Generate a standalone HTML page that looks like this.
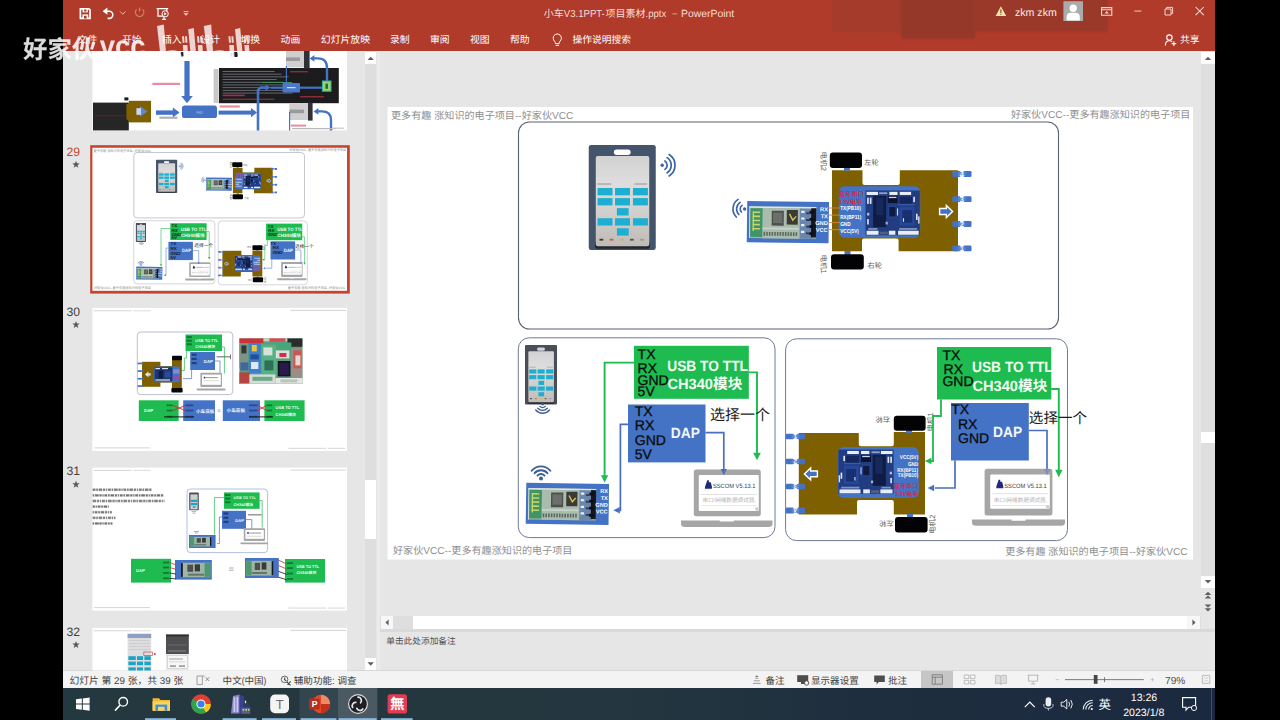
<!DOCTYPE html>
<html lang="zh-CN"><head><meta charset="utf-8"><title>小车V3.1PPT-项目素材.pptx - PowerPoint</title>
<style>
html,body{margin:0;padding:0;background:#000;}
body{width:1280px;height:720px;position:relative;overflow:hidden;font-family:'Liberation Sans','Noto Sans CJK SC',sans-serif;}
.app div{position:absolute;box-sizing:border-box;}
svg{position:absolute;left:0;top:0;overflow:visible;}
svg text{font-family:'Liberation Sans','Noto Sans CJK SC',sans-serif;text-rendering:geometricPrecision;}
</style></head>
<body>
<div class="app">
<div class="window" style="left:63px;top:0px;width:1152px;height:720px;background:#E6E6E6;"></div>
<header><div class="titlebar" style="left:63px;top:0px;width:1152px;height:51px;background:#B03B2B;"></div></header>
<aside><div class="thumb-pane" style="left:63px;top:51px;width:317.4px;height:620px;background:#E6E6E6;"></div>
<div class="thumb-scroll" style="left:365px;top:51px;width:11.4px;height:619.5px;background:#DEDEDE;"></div>
<div class="sb-btn" style="left:365px;top:52.4px;width:11.4px;height:11.6px;background:#fff;"></div>
<div class="sb-btn" style="left:365px;top:657.6px;width:11.4px;height:12.4px;background:#fff;"></div>
<div class="sb-thumb" style="left:365px;top:480px;width:11.4px;height:58.8px;background:#fff;"></div>
<div class="splitter" style="left:376.8px;top:51px;width:4px;height:619.5px;background:#EBEBEB;"></div></aside>
<main><div class="editor" style="left:380.4px;top:51px;width:834.6px;height:578px;background:#E6E6E6;"></div>
<div class="v-scroll" style="left:1201px;top:51px;width:14px;height:565px;background:#DEDEDE;"></div>
<div class="sb-btn" style="left:1201px;top:52.4px;width:14px;height:11.6px;background:#fff;"></div>
<div class="sb-thumb" style="left:1201px;top:431.6px;width:14px;height:11.8px;background:#fff;"></div>
<div class="sb-btn" style="left:1201px;top:575.6px;width:14px;height:12px;background:#fff;"></div>
<div style="left:1201px;top:587.6px;width:14px;height:28.4px;background:#E6E6E6;"></div>
<div class="h-scroll" style="left:380.4px;top:616px;width:820.6px;height:12.8px;background:#DEDEDE;"></div>
<div class="sb-btn" style="left:381px;top:616px;width:12px;height:12.8px;background:#F7F7F7;"></div>
<div class="sb-thumb" style="left:412.6px;top:616px;width:774.8px;height:12.8px;background:#fff;"></div>
<div class="sb-btn" style="left:1187.4px;top:616px;width:13px;height:12.8px;background:#F7F7F7;"></div>
<div class="split" style="left:380.4px;top:628.8px;width:834.6px;height:2.8px;background:#D9D9D9;"></div>
<div class="notes" style="left:380.4px;top:631.6px;width:834.6px;height:39.4px;background:#E6E6E6;"></div></main>
<footer><div class="sb-line" style="left:63px;top:669.6px;width:1152px;height:1.4px;background:#D8D8D8;"></div><div class="statusbar" style="left:63px;top:670.6px;width:1152px;height:17.4px;background:#F3F3F3;"></div>
<div class="view-active" style="left:921px;top:671px;width:32px;height:17px;background:#C6C6C6;"></div>
<div class="taskbar" style="left:63px;top:688px;width:1152px;height:32px;background:linear-gradient(90deg,#24383F 0%,#243740 48%,#1F2F3E 66%,#1B2940 100%);"></div></footer>
</div>
<svg id="ui" width="1280" height="720" viewBox="0 0 1280 720">
<defs><linearGradient id="scr" x1="0" y1="0" x2="0" y2="1"><stop offset="0" stop-color="#d2d2d2"/><stop offset="0.3" stop-color="#dddddd"/><stop offset="0.6" stop-color="#d2d1cf"/><stop offset="1" stop-color="#bfbbb5"/></linearGradient><clipPath id="thumbclip"><rect x="63" y="51" width="317" height="619.5"/></clipPath><filter id="soft" x="-10%" y="-30%" width="120%" height="160%"><feGaussianBlur stdDeviation="3"/></filter><filter id="soft1" x="-5%" y="-20%" width="110%" height="140%"><feGaussianBlur stdDeviation="1.1"/></filter><linearGradient id="tb" x1="0" y1="0" x2="1" y2="0"><stop offset="0" stop-color="#22363F"/><stop offset="0.45" stop-color="#1F303D"/><stop offset="1" stop-color="#1B2941"/></linearGradient><g id="s29"><rect x="387.5" y="107" width="805.5" height="452.5" fill="#fff"/>
<g fill="#8f8f8f"><text x="391" y="119.2" font-size="10.1">更多有趣</text><text x="431.4" y="119.2" font-size="10.1" xml:space="preserve"> </text><text x="434.21" y="119.2" font-size="10.1">涨知识的电子项目</text><text x="515.01" y="119.2" font-size="10.1" xml:space="preserve">--</text><text x="521.73" y="119.2" font-size="10.1">好家伙</text><text x="552.03" y="119.2" font-size="10.1" xml:space="preserve">VCC</text></g>
<g fill="#8f8f8f"><text x="1010.95" y="118.3" font-size="10.1">好家伙</text><text x="1041.25" y="118.3" font-size="10.1" xml:space="preserve">VCC--</text><text x="1069.3" y="118.3" font-size="10.1">更多有趣涨知识的电子项目</text></g>
<g fill="#8f8f8f"><text x="393" y="553.6" font-size="10.1">好家伙</text><text x="423.3" y="553.6" font-size="10.1" xml:space="preserve">VCC--</text><text x="451.35" y="553.6" font-size="10.1">更多有趣涨知识的电子项目</text></g>
<g fill="#8f8f8f"><text x="1005.14" y="555.2" font-size="10.1">更多有趣</text><text x="1045.54" y="555.2" font-size="10.1" xml:space="preserve"> </text><text x="1048.35" y="555.2" font-size="10.1">涨知识的电子项目</text><text x="1129.15" y="555.2" font-size="10.1" xml:space="preserve">--</text><text x="1135.88" y="555.2" font-size="10.1">好家伙</text><text x="1166.18" y="555.2" font-size="10.1" xml:space="preserve">VCC</text></g>
<rect x="518.5" y="122" width="540" height="207" fill="none" rx="11" stroke="#5a6172" stroke-width="1.1"/>
<rect x="588.75" y="145" width="67" height="105" fill="#44546A" rx="2.35"/><rect x="613.88" y="149.51" width="16.75" height="5.46" fill="#fff" rx="2.73"/><rect x="594.98" y="241.18" width="55.07" height="7.56" fill="#23262b" rx="3.35"/><rect x="595.78" y="156.03" width="53.47" height="90.19" fill="url(#scr)" rx="2.01"/><rect x="597.39" y="183.46" width="13.9" height="1.1" fill="#9a9a98"/><rect x="634.28" y="183.46" width="12.83" height="1.1" fill="#9a9a98"/><rect x="597.55" y="188.03" width="14.97" height="7.32" fill="#1DAFD2"/><rect x="615.03" y="188.03" width="14.97" height="7.32" fill="#1DAFD2"/><rect x="632.94" y="188.03" width="14.97" height="7.32" fill="#1DAFD2"/><rect x="597.55" y="198.09" width="14.97" height="7.32" fill="#1DAFD2"/><rect x="615.03" y="198.09" width="14.97" height="7.32" fill="#1DAFD2"/><rect x="632.94" y="198.09" width="14.97" height="7.32" fill="#1DAFD2"/><rect x="616.9" y="208.15" width="11.76" height="7.32" fill="#1DAFD2"/><rect x="597.55" y="218.21" width="14.97" height="7.32" fill="#1DAFD2"/><rect x="615.03" y="218.21" width="14.97" height="7.32" fill="#1DAFD2"/><rect x="632.94" y="218.21" width="14.97" height="7.32" fill="#1DAFD2"/><rect x="616.9" y="228.27" width="11.76" height="7.32" fill="#1DAFD2"/><rect x="599.53" y="238.79" width="3.74" height="1.83" fill="#3b3b3b"/><rect x="609.69" y="238.79" width="3.74" height="1.83" fill="#c45a5a"/><rect x="619.84" y="238.79" width="3.74" height="1.83" fill="#c9b27a"/><rect x="630" y="238.79" width="3.74" height="1.83" fill="#555"/><rect x="640.16" y="238.79" width="3.74" height="1.83" fill="#999"/>
<circle cx="662.2" cy="165.2" r="1.7" fill="#3B64A8"/><path d="M664.92 161.01 A5 5 0 0 1 664.92 169.39" fill="none" stroke="#3B64A8" stroke-width="1.7" stroke-linecap="round"/><path d="M667.1 157.65 A9 9 0 0 1 667.1 172.75" fill="none" stroke="#3B64A8" stroke-width="1.7" stroke-linecap="round"/><path d="M669.17 154.47 A12.8 12.8 0 0 1 669.17 175.93" fill="none" stroke="#3B64A8" stroke-width="1.7" stroke-linecap="round"/>
<circle cx="744.6" cy="209" r="1.7" fill="#3B64A8"/><path d="M741.43 212.06 A4.4 4.4 0 0 1 742.14 205.35" fill="none" stroke="#3B64A8" stroke-width="1.6" stroke-linecap="round"/><path d="M738.85 214.56 A8 8 0 0 1 740.13 202.37" fill="none" stroke="#3B64A8" stroke-width="1.6" stroke-linecap="round"/><path d="M736.26 217.06 A11.6 11.6 0 0 1 738.11 199.38" fill="none" stroke="#3B64A8" stroke-width="1.6" stroke-linecap="round"/>
<g transform="rotate(0.7 787.9 222.2)"><rect x="747" y="201.6" width="81.8" height="41.2" fill="#4472C4"/><rect x="749.29" y="206.75" width="66.83" height="31.72" fill="#9fb3a6"/><rect x="749.29" y="206.75" width="66.83" height="1.59" fill="#dfe6e4"/><rect x="749.29" y="206.75" width="0.8" height="31.72" fill="#dfe6e4"/><rect x="750.29" y="208.65" width="12.36" height="28.55" fill="#3f9566"/><rect x="752.63" y="211.83" width="7.35" height="1.59" fill="#c8d66a"/><rect x="752.63" y="215.95" width="7.35" height="1.59" fill="#c8d66a"/><rect x="752.63" y="220.07" width="7.35" height="1.59" fill="#c8d66a"/><rect x="752.63" y="224.2" width="7.35" height="1.59" fill="#c8d66a"/><rect x="752.63" y="228.32" width="7.35" height="1.59" fill="#c8d66a"/><rect x="752.63" y="211.83" width="1.34" height="19.67" fill="#c8d66a"/><rect x="762.66" y="208.34" width="37.43" height="30.14" fill="#a9bcae"/><rect x="771.68" y="210.87" width="12.03" height="14.91" fill="#4c4f4b"/><rect x="773.02" y="212.78" width="9.36" height="10.47" fill="#6b6f69"/><rect x="786.72" y="209.92" width="11.03" height="14.59" fill="#3a3b36"/><path d="M789.39 213.73 l3.34 6.34 l3.34 -3.81" stroke="#d8c15a" stroke-width="1.44" fill="none"/><rect x="763.66" y="232.13" width="1.6" height="3.81" fill="#5b6a5e"/><rect x="766.33" y="232.13" width="1.6" height="3.81" fill="#5b6a5e"/><rect x="769.01" y="232.13" width="1.6" height="3.81" fill="#5b6a5e"/><rect x="771.68" y="232.13" width="1.6" height="3.81" fill="#5b6a5e"/><rect x="774.35" y="232.13" width="1.6" height="3.81" fill="#5b6a5e"/><rect x="777.03" y="232.13" width="1.6" height="3.81" fill="#5b6a5e"/><rect x="779.7" y="232.13" width="1.6" height="3.81" fill="#5b6a5e"/><rect x="782.37" y="232.13" width="1.6" height="3.81" fill="#5b6a5e"/><rect x="785.04" y="232.13" width="1.6" height="3.81" fill="#5b6a5e"/><rect x="787.72" y="232.13" width="1.6" height="3.81" fill="#5b6a5e"/><rect x="790.39" y="232.13" width="1.6" height="3.81" fill="#5b6a5e"/><rect x="793.06" y="232.13" width="1.6" height="3.81" fill="#5b6a5e"/><rect x="795.74" y="232.13" width="1.6" height="3.81" fill="#5b6a5e"/><rect x="762.66" y="227.69" width="36.09" height="1.9" fill="#c7d3c9"/><rect x="799.75" y="208.34" width="12.36" height="30.14" fill="#6a86ad"/><rect x="801.08" y="210.56" width="3.34" height="2.22" fill="#e8eef4"/><rect x="806.1" y="212.14" width="3.34" height="1.9" fill="#2d3d5a"/><rect x="801.08" y="217.22" width="3.34" height="2.22" fill="#e8eef4"/><rect x="806.1" y="218.81" width="3.34" height="1.9" fill="#2d3d5a"/><rect x="801.08" y="223.88" width="3.34" height="2.22" fill="#e8eef4"/><rect x="806.1" y="225.47" width="3.34" height="1.9" fill="#2d3d5a"/><rect x="801.08" y="230.54" width="3.34" height="2.22" fill="#e8eef4"/><rect x="806.1" y="232.13" width="3.34" height="1.9" fill="#2d3d5a"/><rect x="811.11" y="208.02" width="5.01" height="29.19" fill="#15171c"/><rect x="809.44" y="210.56" width="4.01" height="2.86" fill="#0d0e12"/><rect x="809.44" y="217.69" width="4.01" height="2.86" fill="#0d0e12"/><rect x="809.44" y="224.83" width="4.01" height="2.86" fill="#0d0e12"/><rect x="809.44" y="231.97" width="4.01" height="2.86" fill="#0d0e12"/><g fill="#fff"><text x="819.98" y="210.87" font-size="5.64" font-weight="bold" xml:space="preserve">RX</text></g><g fill="#fff"><text x="820.61" y="217.75" font-size="5.64" font-weight="bold" xml:space="preserve">TX</text></g><g fill="#fff"><text x="815.28" y="224.63" font-size="5.64" font-weight="bold" xml:space="preserve">GND</text></g><g fill="#fff"><text x="815.9" y="231.51" font-size="5.64" font-weight="bold" xml:space="preserve">VCC</text></g></g>
<path d="M832 170.3 H862.5 V183 Q862.5 185 864.5 185 H897.8 Q899.8 185 899.8 183 V170.3 H958 V251.3 H898.6 V240.6 Q898.6 238.6 896.6 238.6 H864 Q862 238.6 862 240.6 V251.3 H832 Z" fill="#7F6000"/>
<rect x="844" y="167.2" width="6" height="3.4" fill="#4472C4"/>
<rect x="844.5" y="251" width="6" height="3.8" fill="#4472C4"/>
<rect x="829.8" y="152.6" width="32.2" height="15.4" fill="#030305" rx="3"/>
<rect x="831" y="254.2" width="32.8" height="15.3" fill="#030305" rx="3"/>
<rect x="838.75" y="186.2" width="81.55" height="51.6" fill="#4472C4" rx="6"/>
<rect x="865.5" y="190.5" width="54.3" height="44.7" fill="#223c80"/><rect x="866.59" y="191.84" width="11.4" height="3.13" fill="#e9edf5"/><rect x="879.08" y="192.29" width="8.14" height="1.79" fill="#8fa2cc"/><rect x="889.39" y="191.84" width="8.14" height="3.13" fill="#e9edf5"/><rect x="899.71" y="191.84" width="11.4" height="3.13" fill="#e9edf5"/><rect x="866.59" y="230.73" width="11.95" height="4.02" fill="#e9edf5"/><rect x="879.62" y="231.62" width="8.14" height="2.68" fill="#55607a"/><rect x="888.85" y="230.73" width="6.52" height="4.02" fill="#e9edf5"/><rect x="898.08" y="230.73" width="20.63" height="4.02" fill="#e9edf5"/><rect x="868.22" y="228.05" width="9.23" height="1.79" fill="#7d93c6"/><rect x="899.17" y="228.05" width="17.92" height="1.79" fill="#7d93c6"/><rect x="873.1" y="195.86" width="13.03" height="31.29" fill="#0f1d45"/><rect x="876.36" y="197.65" width="7.06" height="17.43" fill="#16285c"/><rect x="887.76" y="195.86" width="9.77" height="7.15" fill="#0c1230"/><rect x="888.85" y="196.76" width="7.6" height="1.34" fill="#c9d3ea"/><rect x="887.76" y="205.25" width="9.23" height="12.96" fill="#23418a"/><rect x="889.39" y="207.04" width="5.97" height="9.39" fill="#101a3e"/><rect x="899.71" y="196.76" width="12.49" height="7.15" fill="#14265c"/><rect x="899.71" y="206.59" width="14.66" height="18.77" fill="#27489a"/><rect x="902.42" y="210.17" width="9.77" height="12.52" fill="#17306f"/><rect x="867.13" y="197.65" width="1.63" height="6.26" fill="#dfe5f2"/><rect x="869.84" y="197.65" width="1.63" height="6.26" fill="#dfe5f2"/><rect x="867.13" y="212.85" width="2.17" height="2.68" fill="#b9c4de"/><rect x="867.13" y="219.11" width="1.63" height="5.36" fill="#dfe5f2"/><rect x="896.99" y="208.38" width="1.09" height="7.15" fill="#c9d3ea"/><rect x="913.28" y="196.76" width="1.63" height="5.36" fill="#dfe5f2"/><rect x="916" y="213.74" width="1.63" height="6.26" fill="#dfe5f2"/><rect x="918.17" y="216.43" width="1.36" height="7.15" fill="#dfe5f2"/><rect x="902.97" y="218.21" width="1.09" height="3.58" fill="#dfe5f2"/><rect x="885.59" y="221.79" width="2.17" height="2.68" fill="#9fb0d8"/><rect x="898.08" y="203.91" width="16.29" height="1.34" fill="#3d5aa8"/>
<g fill="#E3214F"><text x="838.8" y="195.9" font-size="6.3" font-weight="bold">蓝牙串口</text></g>
<g fill="#E3214F"><text transform="translate(838.8 203.7) scale(0.85 1)" font-size="6.3" font-weight="bold" xml:space="preserve">3.3V</text><text x="849.82" y="203.7" font-size="6.3" font-weight="bold">电平</text></g>
<g fill="#fff"><text transform="translate(840.2 210.1) scale(0.82 1)" font-size="5.7" font-weight="bold" xml:space="preserve">TX(PB10)</text></g>
<g fill="#fff"><text transform="translate(840.2 218.6) scale(0.82 1)" font-size="5.7" font-weight="bold" xml:space="preserve">RX(BP11)</text></g>
<g fill="#fff"><text transform="translate(840.2 225.7) scale(0.82 1)" font-size="5.7" font-weight="bold" xml:space="preserve">GND</text></g>
<g fill="#fff"><text transform="translate(840.2 232.6) scale(0.82 1)" font-size="5.7" font-weight="bold" xml:space="preserve">VCC(5V)</text></g>
<path d="M828.6 208 L840 208" fill="none" stroke="#D9803A" stroke-width="0.9" />
<path d="M828.6 215.1 L840 215.1" fill="none" stroke="#D9803A" stroke-width="0.9" />
<path d="M828.6 222.6 L840 222.6" fill="none" stroke="#D9803A" stroke-width="0.9" />
<path d="M828.6 229.7 L840 229.7" fill="none" stroke="#D9803A" stroke-width="0.9" />
<polygon points="939.6,208.57 946.36,208.57 946.36,205.4 952.6,211.5 946.36,217.6 946.36,214.43 939.6,214.43" fill="#4472C4" stroke="#fff" stroke-width="1.4" stroke-linejoin="miter"/>
<rect x="952.3" y="171" width="8.06" height="6" fill="#4472C4" rx="1.2"/><rect x="963.44" y="171" width="8.06" height="6" fill="#4472C4" rx="1.2"/><rect x="958.06" y="171.9" width="7.68" height="4.2" fill="#5b86d2"/><g fill="#eef3fc"><text x="959.81" y="177.12" font-size="7.5" font-weight="bold" xml:space="preserve">4</text></g>
<rect x="952.3" y="196.2" width="8.06" height="5.9" fill="#4472C4" rx="1.2"/><rect x="963.44" y="196.2" width="8.06" height="5.9" fill="#4472C4" rx="1.2"/><rect x="958.06" y="197.08" width="7.68" height="4.13" fill="#5b86d2"/><g fill="#eef3fc"><text x="959.85" y="202.22" font-size="7.38" font-weight="bold" xml:space="preserve">3</text></g>
<rect x="952.3" y="221" width="8.06" height="6" fill="#4472C4" rx="1.2"/><rect x="963.44" y="221" width="8.06" height="6" fill="#4472C4" rx="1.2"/><rect x="958.06" y="221.9" width="7.68" height="4.2" fill="#5b86d2"/><g fill="#eef3fc"><text x="959.81" y="227.12" font-size="7.5" font-weight="bold" xml:space="preserve">2</text></g>
<rect x="952.3" y="245.6" width="8.06" height="5.7" fill="#4472C4" rx="1.2"/><rect x="963.44" y="245.6" width="8.06" height="5.7" fill="#4472C4" rx="1.2"/><rect x="958.06" y="246.45" width="7.68" height="3.99" fill="#5b86d2"/><g fill="#eef3fc"><text x="959.92" y="251.41" font-size="7.13" font-weight="bold" xml:space="preserve">1</text></g>
<g fill="#606060"><text x="864.2" y="165.2" font-size="7.2">左轮</text></g>
<g fill="#606060"><text x="867.6" y="268.4" font-size="7.2">右轮</text></g>
<g fill="#606060" transform="rotate(90 821.3 151.6)"><text x="821.3" y="151.6" font-size="7.6">电机</text><text x="836.5" y="151.6" font-size="7.6" xml:space="preserve">2</text></g>
<g fill="#606060" transform="rotate(90 821.3 254.4)"><text x="821.3" y="254.4" font-size="7.6">电机</text><text x="836.5" y="254.4" font-size="7.6" xml:space="preserve">1</text></g>
<rect x="518.3" y="337.8" width="256.7" height="199.8" fill="none" rx="11" stroke="#6f7a94" stroke-width="1"/>
<rect x="525" y="345" width="32" height="59.5" fill="#4a4e58" rx="1.12"/><rect x="537" y="347.56" width="8" height="3.09" fill="#cfd3da" rx="1.55"/><rect x="527.98" y="399.5" width="26.3" height="4.28" fill="#23262b" rx="1.6"/><rect x="528.36" y="351.25" width="25.54" height="51.11" fill="url(#scr)" rx="0.96"/><rect x="529.13" y="366.79" width="6.64" height="0.62" fill="#9a9a98"/><rect x="546.75" y="366.79" width="6.13" height="0.62" fill="#9a9a98"/><rect x="529.2" y="369.39" width="7.15" height="4.15" fill="#1DAFD2"/><rect x="537.55" y="369.39" width="7.15" height="4.15" fill="#1DAFD2"/><rect x="546.11" y="369.39" width="7.15" height="4.15" fill="#1DAFD2"/><rect x="529.2" y="375.09" width="7.15" height="4.15" fill="#1DAFD2"/><rect x="537.55" y="375.09" width="7.15" height="4.15" fill="#1DAFD2"/><rect x="546.11" y="375.09" width="7.15" height="4.15" fill="#1DAFD2"/><rect x="538.45" y="380.79" width="5.62" height="4.15" fill="#1DAFD2"/><rect x="529.2" y="386.49" width="7.15" height="4.15" fill="#1DAFD2"/><rect x="537.55" y="386.49" width="7.15" height="4.15" fill="#1DAFD2"/><rect x="546.11" y="386.49" width="7.15" height="4.15" fill="#1DAFD2"/><rect x="538.45" y="392.19" width="5.62" height="4.15" fill="#1DAFD2"/><rect x="530.15" y="398.15" width="1.79" height="1.04" fill="#3b3b3b"/><rect x="535" y="398.15" width="1.79" height="1.04" fill="#c45a5a"/><rect x="539.85" y="398.15" width="1.79" height="1.04" fill="#c9b27a"/><rect x="544.7" y="398.15" width="1.79" height="1.04" fill="#555"/><rect x="549.55" y="398.15" width="1.79" height="1.04" fill="#999"/>
<circle cx="542.6" cy="404.2" r="1.3" fill="#3d5f96"/><path d="M545.2 406.39 A3.4 3.4 0 0 1 540 406.39" fill="none" stroke="#3d5f96" stroke-width="1.4" stroke-linecap="round"/><path d="M547.35 408.19 A6.2 6.2 0 0 1 537.85 408.19" fill="none" stroke="#3d5f96" stroke-width="1.4" stroke-linecap="round"/><path d="M549.49 409.99 A9 9 0 0 1 535.71 409.99" fill="none" stroke="#3d5f96" stroke-width="1.4" stroke-linecap="round"/>
<circle cx="541" cy="478.6" r="2" fill="#3d5f96"/><path d="M537.48 475.64 A4.6 4.6 0 0 1 544.52 475.64" fill="none" stroke="#3d5f96" stroke-width="1.9" stroke-linecap="round"/><path d="M534.57 473.2 A8.4 8.4 0 0 1 547.43 473.2" fill="none" stroke="#3d5f96" stroke-width="1.9" stroke-linecap="round"/><path d="M531.65 470.76 A12.2 12.2 0 0 1 550.35 470.76" fill="none" stroke="#3d5f96" stroke-width="1.9" stroke-linecap="round"/>
<g transform="rotate(0.8 567.4 503.85)"><rect x="526" y="483.4" width="82.8" height="40.9" fill="#4472C4"/><rect x="528.32" y="488.51" width="67.65" height="31.49" fill="#9fb3a6"/><rect x="528.32" y="488.51" width="67.65" height="1.57" fill="#dfe6e4"/><rect x="528.32" y="488.51" width="0.81" height="31.49" fill="#dfe6e4"/><rect x="529.33" y="490.4" width="12.51" height="28.34" fill="#3f9566"/><rect x="531.7" y="493.55" width="7.44" height="1.57" fill="#c8d66a"/><rect x="531.7" y="497.65" width="7.44" height="1.57" fill="#c8d66a"/><rect x="531.7" y="501.74" width="7.44" height="1.57" fill="#c8d66a"/><rect x="531.7" y="505.83" width="7.44" height="1.57" fill="#c8d66a"/><rect x="531.7" y="509.93" width="7.44" height="1.57" fill="#c8d66a"/><rect x="531.7" y="493.55" width="1.35" height="19.53" fill="#c8d66a"/><rect x="541.85" y="490.09" width="37.88" height="29.92" fill="#a9bcae"/><rect x="550.98" y="492.61" width="12.18" height="14.8" fill="#4c4f4b"/><rect x="552.33" y="494.5" width="9.47" height="10.39" fill="#6b6f69"/><rect x="566.2" y="491.66" width="11.16" height="14.49" fill="#3a3b36"/><path d="M568.91 495.44 l3.38 6.3 l3.38 -3.78" stroke="#d8c15a" stroke-width="1.43" fill="none"/><rect x="542.86" y="513.71" width="1.62" height="3.78" fill="#5b6a5e"/><rect x="545.57" y="513.71" width="1.62" height="3.78" fill="#5b6a5e"/><rect x="548.27" y="513.71" width="1.62" height="3.78" fill="#5b6a5e"/><rect x="550.98" y="513.71" width="1.62" height="3.78" fill="#5b6a5e"/><rect x="553.69" y="513.71" width="1.62" height="3.78" fill="#5b6a5e"/><rect x="556.39" y="513.71" width="1.62" height="3.78" fill="#5b6a5e"/><rect x="559.1" y="513.71" width="1.62" height="3.78" fill="#5b6a5e"/><rect x="561.8" y="513.71" width="1.62" height="3.78" fill="#5b6a5e"/><rect x="564.51" y="513.71" width="1.62" height="3.78" fill="#5b6a5e"/><rect x="567.22" y="513.71" width="1.62" height="3.78" fill="#5b6a5e"/><rect x="569.92" y="513.71" width="1.62" height="3.78" fill="#5b6a5e"/><rect x="572.63" y="513.71" width="1.62" height="3.78" fill="#5b6a5e"/><rect x="575.33" y="513.71" width="1.62" height="3.78" fill="#5b6a5e"/><rect x="541.85" y="509.3" width="36.53" height="1.89" fill="#c7d3c9"/><rect x="579.39" y="490.09" width="12.51" height="29.92" fill="#6a86ad"/><rect x="580.75" y="492.29" width="3.38" height="2.2" fill="#e8eef4"/><rect x="585.82" y="493.87" width="3.38" height="1.89" fill="#2d3d5a"/><rect x="580.75" y="498.91" width="3.38" height="2.2" fill="#e8eef4"/><rect x="585.82" y="500.48" width="3.38" height="1.89" fill="#2d3d5a"/><rect x="580.75" y="505.52" width="3.38" height="2.2" fill="#e8eef4"/><rect x="585.82" y="507.09" width="3.38" height="1.89" fill="#2d3d5a"/><rect x="580.75" y="512.13" width="3.38" height="2.2" fill="#e8eef4"/><rect x="585.82" y="513.71" width="3.38" height="1.89" fill="#2d3d5a"/><rect x="590.89" y="489.77" width="5.07" height="28.97" fill="#15171c"/><rect x="589.2" y="492.29" width="4.06" height="2.83" fill="#0d0e12"/><rect x="589.2" y="499.38" width="4.06" height="2.83" fill="#0d0e12"/><rect x="589.2" y="506.46" width="4.06" height="2.83" fill="#0d0e12"/><rect x="589.2" y="513.55" width="4.06" height="2.83" fill="#0d0e12"/><g fill="#fff"><text x="600.02" y="492.6" font-size="5.6" font-weight="bold" xml:space="preserve">RX</text></g><g fill="#fff"><text x="600.65" y="499.43" font-size="5.6" font-weight="bold" xml:space="preserve">TX</text></g><g fill="#fff"><text x="595.35" y="506.26" font-size="5.6" font-weight="bold" xml:space="preserve">GND</text></g><g fill="#fff"><text x="595.98" y="513.09" font-size="5.6" font-weight="bold" xml:space="preserve">VCC</text></g></g>
<path d="M634 362.6 L604.6 362.6 L604.6 476" fill="none" stroke="#1DBB50" stroke-width="1.9" />
<polygon points="604.6,482.6 600.9,475.2 608.3,475.2" fill="#1DBB50" />
<path d="M748.7 372.4 L757 372.4 L757 454" fill="none" stroke="#1DBB50" stroke-width="1.9" />
<polygon points="757,460.3 753.2,452.7 760.8,452.7" fill="#1DBB50" />
<path d="M628 424.4 L620.4 424.4 L620.4 510.3 L618 510.3" fill="none" stroke="#4a6fc0" stroke-width="1.7" />
<polygon points="613.4,510.3 619.8,507.1 619.8,513.5" fill="#4a6fc0" />
<path d="M705.5 432.6 L723.8 432.6 L723.8 470" fill="none" stroke="#4a6fc0" stroke-width="1.7" />
<rect x="634" y="345.8" width="114.8" height="53" fill="#1DBB50"/><g fill="#0b0b0b" stroke="#0b0b0b" stroke-width="0.3"><text x="637.6" y="359.2" font-size="14" xml:space="preserve">TX</text></g><g fill="#0b0b0b" stroke="#0b0b0b" stroke-width="0.3"><text x="637.6" y="372.6" font-size="14" xml:space="preserve">RX</text></g><g fill="#0b0b0b" stroke="#0b0b0b" stroke-width="0.3"><text x="637.6" y="385.1" font-size="14" xml:space="preserve">GND</text></g><g fill="#0b0b0b" stroke="#0b0b0b" stroke-width="0.3"><text x="637.6" y="396.3" font-size="14" xml:space="preserve">5V</text></g><g fill="#f2fff2"><text transform="translate(667.2 370.6) scale(0.93 1)" font-size="14.8" font-weight="bold" xml:space="preserve">USB TO TTL</text></g><g fill="#f2fff2"><text transform="translate(667.4 389.2) scale(0.99 1)" font-size="14.8" font-weight="bold" xml:space="preserve">CH340</text><text x="713.01" y="389.2" font-size="14.65" font-weight="bold">模块</text></g>
<rect x="628" y="404.5" width="77.5" height="57.9" fill="#4472C4"/><g fill="#0b0b0b" stroke="#0b0b0b" stroke-width="0.3"><text x="634.8" y="416.1" font-size="14" xml:space="preserve">TX</text></g><g fill="#0b0b0b" stroke="#0b0b0b" stroke-width="0.3"><text x="634.8" y="430.3" font-size="14" xml:space="preserve">RX</text></g><g fill="#0b0b0b" stroke="#0b0b0b" stroke-width="0.3"><text x="634.8" y="444.8" font-size="14" xml:space="preserve">GND</text></g><g fill="#0b0b0b" stroke="#0b0b0b" stroke-width="0.3"><text x="634.8" y="459.2" font-size="14" xml:space="preserve">5V</text></g><g fill="#f4f7ff"><text transform="translate(670.8 438) scale(0.93 1)" font-size="14.8" font-weight="bold" xml:space="preserve">DAP</text></g>
<g fill="#1c1c1c"><text x="710" y="420.4" font-size="15">选择一个</text></g>
<rect x="693.8" y="469.5" width="67" height="46.7" fill="#A6A6A6" rx="2.5"/><rect x="698.8" y="475" width="60" height="36" fill="#fff" rx="1"/><path d="M681 520.4 H719.75 V521.6 H733.75 V520.4 H772.5 V524 Q772.5 527 768.5 527 H685 Q681 527 681 524 Z" fill="#A6A6A6"/><path d="M705.1 486.6 l2.2 -6.4 l1.6 0 l0 2 l1.8 0 l1.2 4.4 l0 2.2 l-7 0 z" fill="#1f2a7a"/><g fill="#3a3a3a"><text transform="translate(712.9 488.2) scale(0.93 1)" font-size="6.2" xml:space="preserve">SSCOM V5.13.1</text></g><rect x="700.8" y="494" width="56" height="0.6" fill="#cfcfcf"/><g fill="#b3b3b3"><text x="702.4" y="502.3" font-size="5.6">串口</text><text x="713.6" y="502.3" font-size="5.6" xml:space="preserve">/</text><text x="715.16" y="502.3" font-size="5.6">网络数据调试器</text><text x="754.36" y="502.3" font-size="5.6" xml:space="preserve">,</text></g><rect x="700.8" y="505.5" width="56" height="0.6" fill="#d9d9d9"/><rect x="755.3" y="507.5" width="3" height="3" fill="#c9c9c9"/>
<polygon points="723.8,475.2 720.7,469 726.9,469" fill="#4a6fc0" />
<rect x="785.6" y="338.8" width="281.9" height="201.8" fill="none" rx="11" stroke="#6f7a94" stroke-width="1"/>
<path d="M798.8 433 H858.8 V444.2 Q858.8 446.2 860.8 446.2 H891.8 Q893.8 446.2 893.8 444.2 V432 H925 V514.5 H893.8 V502 Q893.8 500 891.8 500 H859 Q857 500 857 502 V514.5 H798.8 Z" fill="#7F6000"/>
<rect x="906" y="430" width="6" height="3" fill="#4472C4"/>
<rect x="907" y="514" width="6" height="3.6" fill="#4472C4"/>
<rect x="893.8" y="415.8" width="31.8" height="15" fill="#030305" rx="3"/>
<rect x="895" y="517" width="32.6" height="15.6" fill="#030305" rx="3"/>
<rect x="838" y="447" width="80.8" height="51" fill="#4472C4" rx="6"/>
<g transform="translate(1732 0) scale(-1 1)"><rect x="838.4" y="449.6" width="55.2" height="44.2" fill="#223c80"/><rect x="839.5" y="450.93" width="11.59" height="3.09" fill="#e9edf5"/><rect x="852.2" y="451.37" width="8.28" height="1.77" fill="#8fa2cc"/><rect x="862.69" y="450.93" width="8.28" height="3.09" fill="#e9edf5"/><rect x="873.18" y="450.93" width="11.59" height="3.09" fill="#e9edf5"/><rect x="839.5" y="489.38" width="12.14" height="3.98" fill="#e9edf5"/><rect x="852.75" y="490.26" width="8.28" height="2.65" fill="#55607a"/><rect x="862.14" y="489.38" width="6.62" height="3.98" fill="#e9edf5"/><rect x="871.52" y="489.38" width="20.98" height="3.98" fill="#e9edf5"/><rect x="841.16" y="486.73" width="9.38" height="1.77" fill="#7d93c6"/><rect x="872.62" y="486.73" width="18.22" height="1.77" fill="#7d93c6"/><rect x="846.13" y="454.9" width="13.25" height="30.94" fill="#0f1d45"/><rect x="849.44" y="456.67" width="7.18" height="17.24" fill="#16285c"/><rect x="861.03" y="454.9" width="9.94" height="7.07" fill="#0c1230"/><rect x="862.14" y="455.79" width="7.73" height="1.33" fill="#c9d3ea"/><rect x="861.03" y="464.19" width="9.38" height="12.82" fill="#23418a"/><rect x="862.69" y="465.95" width="6.07" height="9.28" fill="#101a3e"/><rect x="873.18" y="455.79" width="12.7" height="7.07" fill="#14265c"/><rect x="873.18" y="465.51" width="14.9" height="18.56" fill="#27489a"/><rect x="875.94" y="469.05" width="9.94" height="12.38" fill="#17306f"/><rect x="840.06" y="456.67" width="1.66" height="6.19" fill="#dfe5f2"/><rect x="842.82" y="456.67" width="1.66" height="6.19" fill="#dfe5f2"/><rect x="840.06" y="471.7" width="2.21" height="2.65" fill="#b9c4de"/><rect x="840.06" y="477.89" width="1.66" height="5.3" fill="#dfe5f2"/><rect x="870.42" y="467.28" width="1.1" height="7.07" fill="#c9d3ea"/><rect x="886.98" y="455.79" width="1.66" height="5.3" fill="#dfe5f2"/><rect x="889.74" y="472.58" width="1.66" height="6.19" fill="#dfe5f2"/><rect x="891.94" y="475.24" width="1.38" height="7.07" fill="#dfe5f2"/><rect x="876.49" y="477" width="1.1" height="3.54" fill="#dfe5f2"/><rect x="858.82" y="480.54" width="2.21" height="2.65" fill="#9fb0d8"/><rect x="871.52" y="462.86" width="16.56" height="1.33" fill="#3d5aa8"/></g>
<g fill="#fff"><text transform="translate(899.83 459.4) scale(0.82 1)" font-size="5.6" font-weight="bold" xml:space="preserve">VCC(5V)</text></g>
<g fill="#fff"><text transform="translate(908 465.8) scale(0.82 1)" font-size="5.6" font-weight="bold" xml:space="preserve">GND</text></g>
<g fill="#fff"><text transform="translate(897.28 471.6) scale(0.82 1)" font-size="5.6" font-weight="bold" xml:space="preserve">RX(BP11)</text></g>
<g fill="#fff"><text transform="translate(897.79 477.4) scale(0.82 1)" font-size="5.6" font-weight="bold" xml:space="preserve">TX(PB10)</text></g>
<g fill="#E3214F"><text x="893.8" y="488.2" font-size="6.2" font-weight="bold">蓝牙串口</text></g>
<g fill="#E3214F"><text transform="translate(895.36 495.6) scale(0.85 1)" font-size="6.2" font-weight="bold" xml:space="preserve">3.3V</text><text x="906.2" y="495.6" font-size="6.2" font-weight="bold">电平</text></g>
<polygon points="817.4,471.07 810.64,471.07 810.64,468 804.4,473.9 810.64,479.8 810.64,476.73 817.4,476.73" fill="#4472C4" stroke="#fff" stroke-width="1.4" stroke-linejoin="miter"/>
<g transform="rotate(180 795.4 436.5)"><rect x="785.8" y="433.8" width="8.06" height="5.4" fill="#4472C4" rx="1.2"/><rect x="796.94" y="433.8" width="8.06" height="5.4" fill="#4472C4" rx="1.2"/><rect x="791.56" y="434.61" width="7.68" height="3.78" fill="#5b86d2"/><g fill="#eef3fc"><text x="793.52" y="439.31" font-size="6.75" font-weight="bold" xml:space="preserve">1</text></g></g>
<g transform="rotate(180 795.4 461.5)"><rect x="785.8" y="458.8" width="8.06" height="5.4" fill="#4472C4" rx="1.2"/><rect x="796.94" y="458.8" width="8.06" height="5.4" fill="#4472C4" rx="1.2"/><rect x="791.56" y="459.61" width="7.68" height="3.78" fill="#5b86d2"/><g fill="#eef3fc"><text x="793.52" y="464.31" font-size="6.75" font-weight="bold" xml:space="preserve">2</text></g></g>
<g transform="rotate(180 795.4 486.5)"><rect x="785.8" y="483.8" width="8.06" height="5.4" fill="#4472C4" rx="1.2"/><rect x="796.94" y="483.8" width="8.06" height="5.4" fill="#4472C4" rx="1.2"/><rect x="791.56" y="484.61" width="7.68" height="3.78" fill="#5b86d2"/><g fill="#eef3fc"><text x="793.52" y="489.31" font-size="6.75" font-weight="bold" xml:space="preserve">3</text></g></g>
<g transform="rotate(180 795.4 510.6)"><rect x="785.8" y="507.6" width="8.06" height="6" fill="#4472C4" rx="1.2"/><rect x="796.94" y="507.6" width="8.06" height="6" fill="#4472C4" rx="1.2"/><rect x="791.56" y="508.5" width="7.68" height="4.2" fill="#5b86d2"/><g fill="#eef3fc"><text x="793.31" y="513.72" font-size="7.5" font-weight="bold" xml:space="preserve">4</text></g></g>
<g fill="#606060" transform="rotate(180 890 416.8)"><text x="890" y="416.8" font-size="7.2">右轮</text></g>
<g fill="#606060" transform="rotate(180 893.4 520.6)"><text x="893.4" y="520.6" font-size="7.2">左轮</text></g>
<g fill="#606060" transform="rotate(-90 932.6 431.6)"><text x="932.6" y="431.6" font-size="7.6">电机</text><text x="947.8" y="431.6" font-size="7.6" xml:space="preserve">1</text></g>
<g fill="#606060" transform="rotate(-90 935.2 534)"><text x="935.2" y="534" font-size="7.6">电机</text><text x="950.4" y="534" font-size="7.6" xml:space="preserve">2</text></g>
<path d="M941 399.5 L941 416 L933 416 L933 461 L931 461" fill="none" stroke="#1DBB50" stroke-width="1.8" />
<polygon points="924.8,461 931.4,457.7 931.4,464.3" fill="#1DBB50" />
<path d="M955 460.5 L955 488 L935 488" fill="none" stroke="#4a6fc0" stroke-width="1.7" />
<polygon points="927.6,488 934.2,484.7 934.2,491.3" fill="#4a6fc0" />
<path d="M1051.2 389 L1058.8 389 L1058.8 471" fill="none" stroke="#1DBB50" stroke-width="1.9" />
<polygon points="1058.8,477.2 1055.1,469.8 1062.5,469.8" fill="#1DBB50" />
<path d="M1028.8 430.5 L1047 430.5 L1047 470" fill="none" stroke="#4a6fc0" stroke-width="1.7" />
<rect x="937" y="347" width="114.3" height="52.5" fill="#1DBB50"/><g fill="#0b0b0b" stroke="#0b0b0b" stroke-width="0.3"><text x="942.4" y="359.6" font-size="14" xml:space="preserve">TX</text></g><g fill="#0b0b0b" stroke="#0b0b0b" stroke-width="0.3"><text x="943.6" y="374" font-size="14" xml:space="preserve">RX</text></g><g fill="#0b0b0b" stroke="#0b0b0b" stroke-width="0.3"><text x="942.4" y="386.2" font-size="14" xml:space="preserve">GND</text></g><g fill="#f2fff2"><text transform="translate(972 371.8) scale(0.93 1)" font-size="14.8" font-weight="bold" xml:space="preserve">USB TO TTL</text></g><g fill="#f2fff2"><text transform="translate(972.4 390.6) scale(0.99 1)" font-size="14.8" font-weight="bold" xml:space="preserve">CH340</text><text x="1018.01" y="390.6" font-size="14.65" font-weight="bold">模块</text></g>
<rect x="951" y="403" width="77.8" height="57.5" fill="#4472C4"/><g fill="#0b0b0b" stroke="#0b0b0b" stroke-width="0.3"><text x="951.2" y="414.2" font-size="14" xml:space="preserve">TX</text></g><g fill="#0b0b0b" stroke="#0b0b0b" stroke-width="0.3"><text x="958" y="428.8" font-size="14" xml:space="preserve">RX</text></g><g fill="#0b0b0b" stroke="#0b0b0b" stroke-width="0.3"><text x="958" y="443.2" font-size="14" xml:space="preserve">GND</text></g><g fill="#f4f7ff"><text transform="translate(993 437) scale(0.93 1)" font-size="14.8" font-weight="bold" xml:space="preserve">DAP</text></g>
<g fill="#1c1c1c"><text x="1028.8" y="422.6" font-size="14.6">选择一个</text></g>
<rect x="984.6" y="468.8" width="67.8" height="46.7" fill="#A6A6A6" rx="2.5"/><rect x="990.2" y="474.5" width="59.6" height="34.3" fill="#fff" rx="1"/><path d="M972 519.5 H1011.5 V520.7 H1025.5 V519.5 H1065 V522.8 Q1065 525.8 1061 525.8 H976 Q972 525.8 972 522.8 Z" fill="#A6A6A6"/><path d="M996.46 486.1 l2.2 -6.4 l1.6 0 l0 2 l1.8 0 l1.2 4.4 l0 2.2 l-7 0 z" fill="#1f2a7a"/><g fill="#3a3a3a"><text transform="translate(1004.21 487.7) scale(0.93 1)" font-size="6.2" xml:space="preserve">SSCOM V5.13.1</text></g><rect x="992.2" y="493.5" width="55.6" height="0.6" fill="#cfcfcf"/><g fill="#b3b3b3"><text x="993.78" y="501.8" font-size="5.6">串口</text><text x="1004.98" y="501.8" font-size="5.6" xml:space="preserve">/</text><text x="1006.53" y="501.8" font-size="5.6">网络数据调试器</text><text x="1045.73" y="501.8" font-size="5.6" xml:space="preserve">,</text></g><rect x="992.2" y="505" width="55.6" height="0.6" fill="#d9d9d9"/><rect x="1046.3" y="505.3" width="3" height="3" fill="#c9c9c9"/>
<polygon points="1047,475.2 1043.9,469 1050.1,469" fill="#7f8fbf" /></g></defs>
<g id="thumbs" clip-path="url(#thumbclip)"><rect x="92.4" y="-12.6" width="254.6" height="143" fill="#fff"/><rect x="93" y="102.6" width="35.8" height="27.8" fill="#262626"/><rect x="95" y="115.6" width="30" height="0.6" fill="#7a2a2a"/><rect x="124.4" y="97.4" width="4" height="3" fill="#1a1a1a"/><rect x="128.8" y="100.8" width="22.2" height="21.6" fill="#7F6000"/><rect x="126.4" y="104" width="4.6" height="15.6" fill="#7F6000"/><polygon points="140,106 147.6,111.4 140,116.8" fill="#5f86cf" /><rect x="136.4" y="108.2" width="4.6" height="6.6" fill="#c9d6ef"/><rect x="156" y="110.4" width="17.6" height="4.4" fill="#4472C4"/><polygon points="172.8,107.6 179.6,112.6 172.8,117.6" fill="#4472C4" /><rect x="184.4" y="61" width="5.2" height="35.8" fill="#4472C4"/><polygon points="181.2,96 192.8,96 187,103.2" fill="#4472C4" /><rect x="180.6" y="52" width="3.2" height="4.4" fill="#26262a" rx="1"/><rect x="233.4" y="52" width="4.6" height="5" fill="#1c1c26" rx="1.2"/><rect x="230.6" y="53" width="1.8" height="3.6" fill="#8a8a90"/><rect x="182" y="105.6" width="35" height="12.4" fill="#4472C4" rx="2.6"/><g fill="#c9d6ef"><text x="196.5" y="113.6" font-size="3.6" xml:space="preserve">PID</text></g><rect x="218.6" y="110.6" width="33" height="4" fill="#4472C4"/><polygon points="251,108 257,112.6 251,117.2" fill="#4472C4" /><rect x="152.4" y="82.8" width="27.6" height="2.2" fill="#ee8aa0"/><rect x="159.4" y="116.6" width="18" height="2.2" fill="#b0b0b0"/><rect x="219.8" y="105.4" width="20" height="2.2" fill="#ee8aa0"/><rect x="219" y="68" width="119.8" height="35.2" fill="#1c1c1e"/><rect x="213.6" y="69" width="5" height="34" fill="#c8c8c8"/><rect x="222.6" y="71" width="52" height="0.9" fill="#6c7076"/><rect x="222.6" y="73.7" width="59" height="0.9" fill="#6c7076"/><rect x="222.6" y="76.4" width="66" height="0.9" fill="#6c7076"/><rect x="222.6" y="79.1" width="54" height="0.9" fill="#6c7076"/><rect x="222.6" y="81.8" width="61" height="0.9" fill="#6c7076"/><rect x="222.6" y="84.5" width="68" height="0.9" fill="#6c7076"/><rect x="222.6" y="87.2" width="56" height="0.9" fill="#6c7076"/><rect x="222.6" y="89.9" width="63" height="0.9" fill="#6c7076"/><rect x="222.6" y="92.6" width="70" height="0.9" fill="#6c7076"/><rect x="222.6" y="94.6" width="22" height="1.6" fill="#a03048"/><rect x="222.6" y="98.6" width="52" height="1.4" fill="#70303c"/><rect x="290" y="71" width="18" height="1.4" fill="#8a2f3a"/><rect x="300" y="96" width="24" height="1.4" fill="#8a2f3a"/><rect x="262" y="82" width="30" height="1" fill="#3f8f5a"/><rect x="286" y="51" width="18" height="16.4" fill="#cfcfcf"/><rect x="304" y="51" width="5.6" height="17.6" fill="#303036"/><rect x="286" y="57.4" width="14" height="3.6" fill="#9a9a9a"/><rect x="289.4" y="103.8" width="18.6" height="16.2" fill="#cfcfcf"/><rect x="308" y="102.6" width="4.6" height="18" fill="#303036"/><rect x="289.4" y="109.6" width="14.6" height="3.6" fill="#9a9a9a"/><path d="M258 130.6 L258 90 L260.6 87.6 L267 87.6" fill="none" stroke="#4472C4" stroke-width="2.6" /><polygon points="265.6,84.4 270.6,87.6 265.6,90.8" fill="#4472C4" /><rect x="270.6" y="86.6" width="12.4" height="2.2" fill="#4472C4"/><rect x="282.6" y="83" width="17.4" height="9.6" fill="#4a78cc" rx="1"/><rect x="287" y="87" width="8.6" height="1.2" fill="#cfdcf5"/><rect x="300" y="86.6" width="22.6" height="2.2" fill="#4472C4"/><rect x="322.4" y="81" width="8.6" height="10.2" fill="#9cd26a" stroke="#2fb7a0" stroke-width="1"/><rect x="325.4" y="83.6" width="2.6" height="5.2" fill="#2a6a3a"/><path d="M327 81 V68 Q327 58.4 318 58.4 H313" fill="none" stroke="#4472C4" stroke-width="2.4"/><polygon points="314.4,55 309.6,58.4 314.4,61.8" fill="#4472C4" /><path d="M331 130.6 V120 Q331 111.4 322 111.4 H317" fill="none" stroke="#4472C4" stroke-width="2.4"/><polygon points="318.4,108 313.6,111.4 318.4,114.8" fill="#4472C4" /><path d="M286.4 83 V66" fill="none" stroke="#4472C4" stroke-width="1.2"/><path d="M289.6 130.6 V112" fill="none" stroke="#4472C4" stroke-width="1.2"/><rect x="291" y="124.6" width="15" height="2" fill="#ee8aa0"/><rect x="292" y="128" width="44" height="1.2" fill="#b9b9b9"/><rect x="332" y="127.6" width="12" height="1.2" fill="#c9c9c9"/>
<rect x="90.2" y="145.2" width="259.6" height="148.4" fill="#C4452C"/><g transform="translate(92.4 147.76) scale(0.3161) translate(-387.5 -107)"><use href="#s29"/></g>
<g fill="#C5482E"><text x="66.6" y="155.56" font-size="12.2" xml:space="preserve">29</text></g><polygon points="76,160.76 76.96,163.33 79.71,163.45 77.56,165.17 78.29,167.82 76,166.3 73.71,167.82 74.44,165.17 72.29,163.45 75.04,163.33" fill="#5a5a5a" />
<rect x="92.4" y="307.9" width="254.6" height="143" fill="#fff"/><rect x="93.6" y="310.2" width="38" height="1.1" fill="#d9d9d9"/><rect x="133.4" y="310.2" width="17" height="1.1" fill="#e0e0e0"/><rect x="290.5" y="309.9" width="55.5" height="1.1" fill="#d9d9d9"/><rect x="94.4" y="447.3" width="55.5" height="1.1" fill="#d9d9d9"/><rect x="288.4" y="447.8" width="38" height="1.1" fill="#d9d9d9"/><rect x="328" y="447.8" width="17" height="1.1" fill="#d9d9d9"/><rect x="137.3" y="332" width="95.5" height="62.6" fill="#fff" rx="3.4" stroke="#a9b0c0" stroke-width="0.8"/><rect x="142" y="361.8" width="18.4" height="25" fill="#7F6000"/><rect x="160" y="366" width="13" height="16.6" fill="#7F6000"/><rect x="172" y="359.6" width="9.8" height="29.4" fill="#7F6000"/><rect x="137.6" y="362.6" width="6" height="1.7" fill="#4472C4"/><rect x="137.6" y="370.2" width="6" height="1.7" fill="#4472C4"/><rect x="137.6" y="377.9" width="6" height="1.7" fill="#4472C4"/><rect x="137.6" y="385.2" width="6" height="1.7" fill="#4472C4"/><rect x="172" y="355.8" width="10" height="4.4" fill="#050507" rx="1"/><rect x="171.4" y="388" width="11.2" height="4.6" fill="#050507" rx="1"/><rect x="154" y="366.5" width="26" height="15.7" fill="#4472C4" rx="2"/><rect x="154.6" y="367.4" width="17.8" height="13.8" fill="#1d3570"/><rect x="155.4" y="368" width="4.6" height="1.2" fill="#dfe5f2"/><rect x="162" y="368" width="6" height="1.2" fill="#dfe5f2"/><rect x="155.4" y="379.4" width="14.6" height="1.2" fill="#dfe5f2"/><rect x="158.6" y="370.4" width="4.4" height="8.2" fill="#0f1d45"/><rect x="165" y="371.4" width="5.6" height="6.2" fill="#2a4a9c"/><rect x="173.2" y="369.4" width="6.2" height="4.2" fill="#7f8fe0"/><rect x="173.2" y="375.4" width="6.2" height="4.6" fill="#8a4fb8"/><polygon points="145,374.4 148.4,371.6 148.4,377.2" fill="#dfe8f7" /><rect x="148.2" y="373.2" width="2.4" height="2.4" fill="#dfe8f7"/><path d="M186.4 351 L186.4 358 L184.4 358 L184.4 370.6 L182 370.6" fill="none" stroke="#1DBB50" stroke-width="0.7" /><path d="M191.6 370 L191.6 378.6 L183 378.6" fill="none" stroke="#4a6fc0" stroke-width="0.7" /><path d="M222 347 L224.4 347 L224.4 373.6" fill="none" stroke="#1DBB50" stroke-width="0.7" /><path d="M215 361 L220 361 L220 373" fill="none" stroke="#4a6fc0" stroke-width="0.7" /><rect x="185.5" y="334.5" width="36.5" height="16.5" fill="#1DBB50"/><rect x="186.5" y="336.1" width="5.4" height="2" fill="#127a32"/><rect x="186.5" y="339.7" width="5.4" height="2" fill="#127a32"/><rect x="186.5" y="343.3" width="5.4" height="2" fill="#127a32"/><g fill="#effff0"><text x="195.35" y="341.6" font-size="3.9" font-weight="bold" xml:space="preserve">USB TO TTL</text></g><g fill="#effff0"><text x="195.35" y="347.7" font-size="3.9" font-weight="bold" xml:space="preserve">CH340</text><text x="207.49" y="347.7" font-size="3.9" font-weight="bold">模块</text></g><rect x="190.2" y="352" width="24.8" height="18" fill="#4472C4"/><rect x="191.6" y="353.6" width="5" height="2.2" fill="#22407f"/><rect x="191.6" y="357.8" width="5" height="2.2" fill="#22407f"/><rect x="191.6" y="362" width="5" height="2.2" fill="#22407f"/><g fill="#f4f7ff"><text x="203.84" y="363.16" font-size="4.3" font-weight="bold" xml:space="preserve">DAP</text></g><rect x="216.6" y="356.4" width="13.6" height="0.9" fill="#555"/><rect x="230" y="354.6" width="0.8" height="4.6" fill="#555"/><rect x="200.4" y="372.8" width="21.6" height="14.2" fill="#A6A6A6" rx="1"/><rect x="202" y="374.6" width="18.8" height="10.2" fill="#fff"/><rect x="203.8" y="376.8" width="1.6" height="1.6" fill="#1f2a7a"/><rect x="206" y="377.2" width="11.88" height="0.9" fill="#8d8d8d"/><rect x="203.4" y="380.4" width="15.55" height="0.8" fill="#cfcfcf"/><rect x="196.6" y="388.4" width="29" height="2" fill="#A6A6A6" rx="0.8"/><rect x="239.4" y="338.4" width="63" height="45.6" fill="#5d9c7d"/><rect x="239.4" y="338.4" width="63" height="3" fill="#c9ccc6"/><rect x="239.4" y="338.4" width="24" height="4.6" fill="#c8323a"/><rect x="269.4" y="338.4" width="16" height="3.4" fill="#d94a55"/><rect x="287.4" y="338.4" width="15" height="8.4" fill="#2b2b2d"/><rect x="239.4" y="343.4" width="8.6" height="25" fill="#7e9285"/><rect x="241.4" y="345.4" width="5" height="8" fill="#2f3a33"/><rect x="240.4" y="362.4" width="8" height="8" fill="#41679c"/><rect x="248.8" y="343" width="12" height="30" fill="#3c7fce"/><rect x="251.8" y="345" width="5" height="6.4" fill="#e8c83a"/><rect x="250.4" y="354.4" width="8.4" height="5" fill="#24508f"/><rect x="251" y="362" width="7.4" height="7" fill="#dfe9f6"/><rect x="261.4" y="344.4" width="15" height="34" fill="#56b184"/><rect x="263.4" y="347.4" width="9" height="8" fill="#d9e2d9"/><rect x="264.4" y="360.4" width="9" height="10" fill="#2f6f55"/><rect x="276.4" y="342.4" width="15" height="7" fill="#49a679"/><rect x="275.8" y="350.4" width="13.6" height="8" fill="#d9dfda"/><rect x="279.4" y="353" width="7" height="4" fill="#d22f45"/><rect x="277.8" y="361" width="12.6" height="15.4" fill="#16131f"/><rect x="279.4" y="363" width="9.4" height="11.8" fill="#2a1c4a"/><rect x="291.4" y="348.4" width="11" height="30" fill="#9a8f88"/><rect x="293.4" y="350.4" width="8" height="18" fill="#c9564f"/><rect x="295.4" y="355.4" width="5" height="10" fill="#e3d9d2"/><rect x="239.4" y="372.4" width="10" height="11.6" fill="#b5453f"/><rect x="249.4" y="374.4" width="26" height="9.6" fill="#d5ddd6"/><rect x="252.4" y="376.8" width="20" height="4" fill="#6aa98a"/><rect x="275.4" y="378" width="27" height="6" fill="#e6e6e2"/><rect x="280.4" y="379.4" width="17" height="3" fill="#b8c5ba"/><rect x="239.4" y="383.4" width="63" height="0.6" fill="#c7b9b3"/><rect x="138.8" y="400.3" width="39.8" height="20.7" fill="#1DBB50"/><rect x="183.2" y="400.3" width="31.8" height="20.7" fill="#4472C4"/><rect x="222.8" y="400.3" width="37.2" height="20.7" fill="#4472C4"/><rect x="264.4" y="400.3" width="40.2" height="20.7" fill="#1DBB50"/><g fill="#effff0"><text x="144" y="411.8" font-size="4.4" font-weight="bold" xml:space="preserve">DAP</text></g><rect x="166.6" y="404.4" width="6" height="1.8" fill="#127a32"/><rect x="185.4" y="404.4" width="8" height="1.8" fill="#2a4a93"/><rect x="249" y="404.4" width="8.4" height="1.8" fill="#2a4a93"/><rect x="266.6" y="404.4" width="5.6" height="1.8" fill="#127a32"/><rect x="166.6" y="409.6" width="6" height="1.8" fill="#127a32"/><rect x="185.4" y="409.6" width="8" height="1.8" fill="#2a4a93"/><rect x="249" y="409.6" width="8.4" height="1.8" fill="#2a4a93"/><rect x="266.6" y="409.6" width="5.6" height="1.8" fill="#127a32"/><rect x="166.6" y="415.8" width="6" height="1.8" fill="#127a32"/><rect x="185.4" y="415.8" width="8" height="1.8" fill="#2a4a93"/><rect x="249" y="415.8" width="8.4" height="1.8" fill="#2a4a93"/><rect x="266.6" y="415.8" width="5.6" height="1.8" fill="#127a32"/><g fill="#eef3ff"><text x="196" y="413" font-size="4.6" font-weight="bold">小车底板</text></g><g fill="#eef3ff"><text x="226.6" y="412.4" font-size="4.6" font-weight="bold">小车底板</text></g><g fill="#effff0"><text x="275.6" y="409" font-size="4" font-weight="bold" xml:space="preserve">USB TO TTL</text></g><g fill="#effff0"><text x="275.6" y="415.6" font-size="4" font-weight="bold" xml:space="preserve">CH340</text><text x="288.05" y="415.6" font-size="4" font-weight="bold">模块</text></g><path d="M173 405.4 L185.4 410.6" fill="none" stroke="#d9252f" stroke-width="0.9" /><path d="M173 410.6 L185.4 405.4" fill="none" stroke="#d9252f" stroke-width="0.9" /><path d="M257.6 405.4 L266.6 410.6" fill="none" stroke="#d9252f" stroke-width="0.9" /><path d="M257.6 410.6 L266.6 405.4" fill="none" stroke="#d9252f" stroke-width="0.9" /><rect x="164" y="416.4" width="30" height="1" fill="#1a1a1a"/><rect x="249" y="416.4" width="24" height="1" fill="#1a1a1a"/><g fill="#a0a0a0"><text x="217" y="412.4" font-size="3.6">或</text></g><g fill="#444"><text x="66.6" y="315.7" font-size="12.2" xml:space="preserve">30</text></g><polygon points="76,320.9 76.96,323.47 79.71,323.59 77.56,325.31 78.29,327.96 76,326.44 73.71,327.96 74.44,325.31 72.29,323.59 75.04,323.47" fill="#5a5a5a" />
<rect x="92.4" y="467.6" width="254.6" height="143" fill="#fff"/><rect x="93.6" y="469.9" width="38" height="1.1" fill="#d9d9d9"/><rect x="133.4" y="469.9" width="17" height="1.1" fill="#e0e0e0"/><rect x="290.5" y="469.6" width="55.5" height="1.1" fill="#d9d9d9"/><rect x="94.4" y="607" width="55.5" height="1.1" fill="#d9d9d9"/><rect x="288.4" y="607.5" width="38" height="1.1" fill="#d9d9d9"/><rect x="328" y="607.5" width="17" height="1.1" fill="#d9d9d9"/><rect x="92.6" y="488.4" width="2.9" height="2.7" fill="#9c9c9c"/><rect x="92.9" y="489.3" width="2.3" height="0.9" fill="#6a6a6a"/><rect x="96.2" y="488.4" width="1.7" height="2.7" fill="#9c9c9c"/><rect x="96.5" y="489.3" width="1.1" height="0.9" fill="#6a6a6a"/><rect x="98.6" y="488.4" width="3.7" height="2.7" fill="#9c9c9c"/><rect x="98.9" y="489.3" width="3.1" height="0.9" fill="#6a6a6a"/><rect x="103" y="488.4" width="2.3" height="2.7" fill="#9c9c9c"/><rect x="103.3" y="489.3" width="1.7" height="0.9" fill="#6a6a6a"/><rect x="106" y="488.4" width="1.3" height="2.7" fill="#9c9c9c"/><rect x="106.3" y="489.3" width="0.7" height="0.9" fill="#6a6a6a"/><rect x="108" y="488.4" width="2.9" height="2.7" fill="#9c9c9c"/><rect x="108.3" y="489.3" width="2.3" height="0.9" fill="#6a6a6a"/><rect x="111.6" y="488.4" width="1.7" height="2.7" fill="#9c9c9c"/><rect x="111.9" y="489.3" width="1.1" height="0.9" fill="#6a6a6a"/><rect x="114" y="488.4" width="3.7" height="2.7" fill="#9c9c9c"/><rect x="114.3" y="489.3" width="3.1" height="0.9" fill="#6a6a6a"/><rect x="118.4" y="488.4" width="2.3" height="2.7" fill="#9c9c9c"/><rect x="118.7" y="489.3" width="1.7" height="0.9" fill="#6a6a6a"/><rect x="121.4" y="488.4" width="1.3" height="2.7" fill="#9c9c9c"/><rect x="121.7" y="489.3" width="0.7" height="0.9" fill="#6a6a6a"/><rect x="123.4" y="488.4" width="2.9" height="2.7" fill="#9c9c9c"/><rect x="123.7" y="489.3" width="2.3" height="0.9" fill="#6a6a6a"/><rect x="127" y="488.4" width="1.7" height="2.7" fill="#9c9c9c"/><rect x="127.3" y="489.3" width="1.1" height="0.9" fill="#6a6a6a"/><rect x="129.4" y="488.4" width="3.7" height="2.7" fill="#9c9c9c"/><rect x="129.7" y="489.3" width="3.1" height="0.9" fill="#6a6a6a"/><rect x="133.8" y="488.4" width="2.3" height="2.7" fill="#9c9c9c"/><rect x="134.1" y="489.3" width="1.7" height="0.9" fill="#6a6a6a"/><rect x="136.8" y="488.4" width="1.3" height="2.7" fill="#9c9c9c"/><rect x="137.1" y="489.3" width="0.7" height="0.9" fill="#6a6a6a"/><rect x="138.8" y="488.4" width="2.9" height="2.7" fill="#9c9c9c"/><rect x="139.1" y="489.3" width="2.3" height="0.9" fill="#6a6a6a"/><rect x="142.4" y="488.4" width="1.7" height="2.7" fill="#9c9c9c"/><rect x="142.7" y="489.3" width="1.1" height="0.9" fill="#6a6a6a"/><rect x="144.8" y="488.4" width="3.7" height="2.7" fill="#9c9c9c"/><rect x="145.1" y="489.3" width="3.1" height="0.9" fill="#6a6a6a"/><rect x="149.2" y="488.4" width="2.3" height="2.7" fill="#9c9c9c"/><rect x="149.5" y="489.3" width="1.7" height="0.9" fill="#6a6a6a"/><rect x="92.6" y="494.02" width="1.7" height="2.7" fill="#9c9c9c"/><rect x="92.9" y="494.92" width="1.1" height="0.9" fill="#6a6a6a"/><rect x="95" y="494.02" width="3.7" height="2.7" fill="#9c9c9c"/><rect x="95.3" y="494.92" width="3.1" height="0.9" fill="#6a6a6a"/><rect x="99.4" y="494.02" width="2.3" height="2.7" fill="#9c9c9c"/><rect x="99.7" y="494.92" width="1.7" height="0.9" fill="#6a6a6a"/><rect x="102.4" y="494.02" width="1.3" height="2.7" fill="#9c9c9c"/><rect x="102.7" y="494.92" width="0.7" height="0.9" fill="#6a6a6a"/><rect x="104.4" y="494.02" width="2.9" height="2.7" fill="#9c9c9c"/><rect x="104.7" y="494.92" width="2.3" height="0.9" fill="#6a6a6a"/><rect x="108" y="494.02" width="1.7" height="2.7" fill="#9c9c9c"/><rect x="108.3" y="494.92" width="1.1" height="0.9" fill="#6a6a6a"/><rect x="110.4" y="494.02" width="3.7" height="2.7" fill="#9c9c9c"/><rect x="110.7" y="494.92" width="3.1" height="0.9" fill="#6a6a6a"/><rect x="114.8" y="494.02" width="2.3" height="2.7" fill="#9c9c9c"/><rect x="115.1" y="494.92" width="1.7" height="0.9" fill="#6a6a6a"/><rect x="117.8" y="494.02" width="1.3" height="2.7" fill="#9c9c9c"/><rect x="118.1" y="494.92" width="0.7" height="0.9" fill="#6a6a6a"/><rect x="119.8" y="494.02" width="2.9" height="2.7" fill="#9c9c9c"/><rect x="120.1" y="494.92" width="2.3" height="0.9" fill="#6a6a6a"/><rect x="123.4" y="494.02" width="1.7" height="2.7" fill="#9c9c9c"/><rect x="123.7" y="494.92" width="1.1" height="0.9" fill="#6a6a6a"/><rect x="125.8" y="494.02" width="3.7" height="2.7" fill="#9c9c9c"/><rect x="126.1" y="494.92" width="3.1" height="0.9" fill="#6a6a6a"/><rect x="130.2" y="494.02" width="2.3" height="2.7" fill="#9c9c9c"/><rect x="130.5" y="494.92" width="1.7" height="0.9" fill="#6a6a6a"/><rect x="133.2" y="494.02" width="1.3" height="2.7" fill="#9c9c9c"/><rect x="133.5" y="494.92" width="0.7" height="0.9" fill="#6a6a6a"/><rect x="135.2" y="494.02" width="2.9" height="2.7" fill="#9c9c9c"/><rect x="135.5" y="494.92" width="2.3" height="0.9" fill="#6a6a6a"/><rect x="138.8" y="494.02" width="1.7" height="2.7" fill="#9c9c9c"/><rect x="139.1" y="494.92" width="1.1" height="0.9" fill="#6a6a6a"/><rect x="141.2" y="494.02" width="3.7" height="2.7" fill="#9c9c9c"/><rect x="141.5" y="494.92" width="3.1" height="0.9" fill="#6a6a6a"/><rect x="145.6" y="494.02" width="2.3" height="2.7" fill="#9c9c9c"/><rect x="145.9" y="494.92" width="1.7" height="0.9" fill="#6a6a6a"/><rect x="148.6" y="494.02" width="1.3" height="2.7" fill="#9c9c9c"/><rect x="148.9" y="494.92" width="0.7" height="0.9" fill="#6a6a6a"/><rect x="150.6" y="494.02" width="2.9" height="2.7" fill="#9c9c9c"/><rect x="150.9" y="494.92" width="2.3" height="0.9" fill="#6a6a6a"/><rect x="154.2" y="494.02" width="1.7" height="2.7" fill="#9c9c9c"/><rect x="154.5" y="494.92" width="1.1" height="0.9" fill="#6a6a6a"/><rect x="156.6" y="494.02" width="3.7" height="2.7" fill="#9c9c9c"/><rect x="156.9" y="494.92" width="3.1" height="0.9" fill="#6a6a6a"/><rect x="161" y="494.02" width="2.3" height="2.7" fill="#9c9c9c"/><rect x="161.3" y="494.92" width="1.7" height="0.9" fill="#6a6a6a"/><rect x="92.6" y="499.64" width="3.7" height="2.7" fill="#9c9c9c"/><rect x="92.9" y="500.54" width="3.1" height="0.9" fill="#6a6a6a"/><rect x="97" y="499.64" width="2.3" height="2.7" fill="#9c9c9c"/><rect x="97.3" y="500.54" width="1.7" height="0.9" fill="#6a6a6a"/><rect x="100" y="499.64" width="1.3" height="2.7" fill="#9c9c9c"/><rect x="100.3" y="500.54" width="0.7" height="0.9" fill="#6a6a6a"/><rect x="102" y="499.64" width="2.9" height="2.7" fill="#9c9c9c"/><rect x="102.3" y="500.54" width="2.3" height="0.9" fill="#6a6a6a"/><rect x="105.6" y="499.64" width="1.7" height="2.7" fill="#9c9c9c"/><rect x="105.9" y="500.54" width="1.1" height="0.9" fill="#6a6a6a"/><rect x="108" y="499.64" width="3.7" height="2.7" fill="#9c9c9c"/><rect x="108.3" y="500.54" width="3.1" height="0.9" fill="#6a6a6a"/><rect x="112.4" y="499.64" width="2.3" height="2.7" fill="#9c9c9c"/><rect x="112.7" y="500.54" width="1.7" height="0.9" fill="#6a6a6a"/><rect x="115.4" y="499.64" width="1.3" height="2.7" fill="#9c9c9c"/><rect x="115.7" y="500.54" width="0.7" height="0.9" fill="#6a6a6a"/><rect x="117.4" y="499.64" width="2.9" height="2.7" fill="#9c9c9c"/><rect x="117.7" y="500.54" width="2.3" height="0.9" fill="#6a6a6a"/><rect x="121" y="499.64" width="1.7" height="2.7" fill="#9c9c9c"/><rect x="121.3" y="500.54" width="1.1" height="0.9" fill="#6a6a6a"/><rect x="123.4" y="499.64" width="3.7" height="2.7" fill="#9c9c9c"/><rect x="123.7" y="500.54" width="3.1" height="0.9" fill="#6a6a6a"/><rect x="127.8" y="499.64" width="2.3" height="2.7" fill="#9c9c9c"/><rect x="128.1" y="500.54" width="1.7" height="0.9" fill="#6a6a6a"/><rect x="130.8" y="499.64" width="1.3" height="2.7" fill="#9c9c9c"/><rect x="131.1" y="500.54" width="0.7" height="0.9" fill="#6a6a6a"/><rect x="132.8" y="499.64" width="2.9" height="2.7" fill="#9c9c9c"/><rect x="133.1" y="500.54" width="2.3" height="0.9" fill="#6a6a6a"/><rect x="136.4" y="499.64" width="1.7" height="2.7" fill="#9c9c9c"/><rect x="136.7" y="500.54" width="1.1" height="0.9" fill="#6a6a6a"/><rect x="138.8" y="499.64" width="3.7" height="2.7" fill="#9c9c9c"/><rect x="139.1" y="500.54" width="3.1" height="0.9" fill="#6a6a6a"/><rect x="143.2" y="499.64" width="2.3" height="2.7" fill="#9c9c9c"/><rect x="143.5" y="500.54" width="1.7" height="0.9" fill="#6a6a6a"/><rect x="146.2" y="499.64" width="1.3" height="2.7" fill="#9c9c9c"/><rect x="146.5" y="500.54" width="0.7" height="0.9" fill="#6a6a6a"/><rect x="148.2" y="499.64" width="2.9" height="2.7" fill="#9c9c9c"/><rect x="148.5" y="500.54" width="2.3" height="0.9" fill="#6a6a6a"/><rect x="151.8" y="499.64" width="1.7" height="2.7" fill="#9c9c9c"/><rect x="152.1" y="500.54" width="1.1" height="0.9" fill="#6a6a6a"/><rect x="154.2" y="499.64" width="3.7" height="2.7" fill="#9c9c9c"/><rect x="154.5" y="500.54" width="3.1" height="0.9" fill="#6a6a6a"/><rect x="158.6" y="499.64" width="2.3" height="2.7" fill="#9c9c9c"/><rect x="158.9" y="500.54" width="1.7" height="0.9" fill="#6a6a6a"/><rect x="161.6" y="499.64" width="1.3" height="2.7" fill="#9c9c9c"/><rect x="161.9" y="500.54" width="0.7" height="0.9" fill="#6a6a6a"/><rect x="163.6" y="499.64" width="0.9" height="2.7" fill="#9c9c9c"/><rect x="163.9" y="500.54" width="0.3" height="0.9" fill="#6a6a6a"/><rect x="92.6" y="505.26" width="2.3" height="2.7" fill="#9c9c9c"/><rect x="92.9" y="506.16" width="1.7" height="0.9" fill="#6a6a6a"/><rect x="95.6" y="505.26" width="1.3" height="2.7" fill="#9c9c9c"/><rect x="95.9" y="506.16" width="0.7" height="0.9" fill="#6a6a6a"/><rect x="97.6" y="505.26" width="2.9" height="2.7" fill="#9c9c9c"/><rect x="97.9" y="506.16" width="2.3" height="0.9" fill="#6a6a6a"/><rect x="101.2" y="505.26" width="1.7" height="2.7" fill="#9c9c9c"/><rect x="101.5" y="506.16" width="1.1" height="0.9" fill="#6a6a6a"/><rect x="103.6" y="505.26" width="3.7" height="2.7" fill="#9c9c9c"/><rect x="103.9" y="506.16" width="3.1" height="0.9" fill="#6a6a6a"/><rect x="108" y="505.26" width="0.9" height="2.7" fill="#9c9c9c"/><rect x="108.3" y="506.16" width="0.3" height="0.9" fill="#6a6a6a"/><rect x="92.6" y="510.88" width="1.3" height="2.7" fill="#9c9c9c"/><rect x="92.9" y="511.78" width="0.7" height="0.9" fill="#6a6a6a"/><rect x="94.6" y="510.88" width="2.9" height="2.7" fill="#9c9c9c"/><rect x="94.9" y="511.78" width="2.3" height="0.9" fill="#6a6a6a"/><rect x="98.2" y="510.88" width="1.7" height="2.7" fill="#9c9c9c"/><rect x="98.5" y="511.78" width="1.1" height="0.9" fill="#6a6a6a"/><rect x="100.6" y="510.88" width="3.7" height="2.7" fill="#9c9c9c"/><rect x="100.9" y="511.78" width="3.1" height="0.9" fill="#6a6a6a"/><rect x="105" y="510.88" width="2.3" height="2.7" fill="#9c9c9c"/><rect x="105.3" y="511.78" width="1.7" height="0.9" fill="#6a6a6a"/><rect x="108" y="510.88" width="1.3" height="2.7" fill="#9c9c9c"/><rect x="108.3" y="511.78" width="0.7" height="0.9" fill="#6a6a6a"/><rect x="110" y="510.88" width="1.9" height="2.7" fill="#9c9c9c"/><rect x="110.3" y="511.78" width="1.3" height="0.9" fill="#6a6a6a"/><rect x="92.6" y="516.5" width="2.9" height="2.7" fill="#9c9c9c"/><rect x="92.9" y="517.4" width="2.3" height="0.9" fill="#6a6a6a"/><rect x="96.2" y="516.5" width="1.7" height="2.7" fill="#9c9c9c"/><rect x="96.5" y="517.4" width="1.1" height="0.9" fill="#6a6a6a"/><rect x="98.6" y="516.5" width="3.7" height="2.7" fill="#9c9c9c"/><rect x="98.9" y="517.4" width="3.1" height="0.9" fill="#6a6a6a"/><rect x="103" y="516.5" width="2.3" height="2.7" fill="#9c9c9c"/><rect x="103.3" y="517.4" width="1.7" height="0.9" fill="#6a6a6a"/><rect x="106" y="516.5" width="1.3" height="2.7" fill="#9c9c9c"/><rect x="106.3" y="517.4" width="0.7" height="0.9" fill="#6a6a6a"/><rect x="108" y="516.5" width="2.9" height="2.7" fill="#9c9c9c"/><rect x="108.3" y="517.4" width="2.3" height="0.9" fill="#6a6a6a"/><rect x="111.6" y="516.5" width="1.7" height="2.7" fill="#9c9c9c"/><rect x="111.9" y="517.4" width="1.1" height="0.9" fill="#6a6a6a"/><rect x="114" y="516.5" width="1.5" height="2.7" fill="#9c9c9c"/><rect x="114.3" y="517.4" width="0.9" height="0.9" fill="#6a6a6a"/><rect x="92.6" y="522.12" width="1.7" height="2.7" fill="#9c9c9c"/><rect x="92.9" y="523.02" width="1.1" height="0.9" fill="#6a6a6a"/><rect x="95" y="522.12" width="3.7" height="2.7" fill="#9c9c9c"/><rect x="95.3" y="523.02" width="3.1" height="0.9" fill="#6a6a6a"/><rect x="99.4" y="522.12" width="2.3" height="2.7" fill="#9c9c9c"/><rect x="99.7" y="523.02" width="1.7" height="0.9" fill="#6a6a6a"/><rect x="102.4" y="522.12" width="1.3" height="2.7" fill="#9c9c9c"/><rect x="102.7" y="523.02" width="0.7" height="0.9" fill="#6a6a6a"/><rect x="104.4" y="522.12" width="2.9" height="2.7" fill="#9c9c9c"/><rect x="104.7" y="523.02" width="2.3" height="0.9" fill="#6a6a6a"/><rect x="108" y="522.12" width="1.7" height="2.7" fill="#9c9c9c"/><rect x="108.3" y="523.02" width="1.1" height="0.9" fill="#6a6a6a"/><rect x="110.4" y="522.12" width="2.1" height="2.7" fill="#9c9c9c"/><rect x="110.7" y="523.02" width="1.5" height="0.9" fill="#6a6a6a"/><rect x="187" y="489" width="80.6" height="63.6" fill="#fff" rx="3.4" stroke="#9fb0d6" stroke-width="0.8"/><rect x="189.2" y="492.4" width="9.6" height="17.8" fill="#4a4e58" rx="0.8"/><rect x="190.4" y="494.4" width="7.2" height="15" fill="#cfcfce"/><rect x="190.8" y="499.8" width="6.4" height="2.2" fill="#1CA4C4"/><rect x="190.8" y="503" width="6.4" height="2.2" fill="#1CA4C4"/><rect x="192.8" y="506.2" width="2.6" height="1.6" fill="#1CA4C4"/><rect x="191.6" y="511.4" width="4.6" height="0.7" fill="#7a93c0"/><rect x="192.6" y="512.8" width="2.6" height="0.7" fill="#7a93c0"/><rect x="194" y="531.2" width="5" height="0.7" fill="#7a93c0"/><rect x="195" y="532.6" width="3" height="0.7" fill="#7a93c0"/><path d="M224 497.6 L214.4 497.6 L214.4 534.6" fill="none" stroke="#1DBB50" stroke-width="0.7" /><path d="M259.5 500.6 L262.2 500.6 L262.2 527.6" fill="none" stroke="#1DBB50" stroke-width="0.7" /><path d="M222 517 L219.4 517 L219.4 543.6 L217 543.6" fill="none" stroke="#4a6fc0" stroke-width="0.7" /><path d="M246 519.6 L251.8 519.6 L251.8 530" fill="none" stroke="#4a6fc0" stroke-width="0.7" /><rect x="224" y="492.4" width="35.6" height="16.4" fill="#1DBB50"/><rect x="225" y="494" width="5.4" height="2" fill="#127a32"/><rect x="225" y="497.6" width="5.4" height="2" fill="#127a32"/><rect x="225" y="501.2" width="5.4" height="2" fill="#127a32"/><g fill="#effff0"><text x="233.61" y="499.45" font-size="3.8" font-weight="bold" xml:space="preserve">USB TO TTL</text></g><g fill="#effff0"><text x="233.61" y="505.52" font-size="3.8" font-weight="bold" xml:space="preserve">CH340</text><text x="245.44" y="505.52" font-size="3.8" font-weight="bold">模块</text></g><rect x="222" y="510.8" width="24" height="18" fill="#4472C4"/><rect x="223.4" y="512.4" width="5" height="2.2" fill="#22407f"/><rect x="223.4" y="516.6" width="5" height="2.2" fill="#22407f"/><rect x="223.4" y="520.8" width="5" height="2.2" fill="#22407f"/><g fill="#f4f7ff"><text x="235.2" y="521.96" font-size="4.2" font-weight="bold" xml:space="preserve">DAP</text></g><rect x="248" y="514.4" width="13.6" height="0.9" fill="#555"/><rect x="189" y="535" width="26.6" height="13" fill="#4472C4"/><rect x="190.06" y="536.82" width="20.75" height="9.62" fill="#9fb3a6"/><rect x="190.06" y="537.08" width="4.15" height="9.1" fill="#4a9a6c"/><rect x="196.7" y="538.12" width="4.15" height="4.68" fill="#4c4f4b"/><rect x="202.1" y="537.86" width="3.73" height="4.68" fill="#3a3b36"/><rect x="194.63" y="544.1" width="11.62" height="1.3" fill="#66756a"/><rect x="209.98" y="537.08" width="1.24" height="9.1" fill="#15171c"/><rect x="243.8" y="528.2" width="21.2" height="12.8" fill="#A6A6A6" rx="1"/><rect x="245.4" y="530" width="18.4" height="8.8" fill="#fff"/><rect x="247.2" y="532.2" width="1.6" height="1.6" fill="#1f2a7a"/><rect x="249.4" y="532.6" width="11.66" height="0.9" fill="#8d8d8d"/><rect x="246.8" y="535.8" width="15.26" height="0.8" fill="#cfcfcf"/><rect x="240.4" y="542.4" width="27.4" height="1.8" fill="#A6A6A6" rx="0.8"/><rect x="131" y="558.8" width="40" height="23.8" fill="#1DBB50"/><g fill="#effff0"><text x="136" y="571.8" font-size="4.2" font-weight="bold" xml:space="preserve">DAP</text></g><rect x="175" y="560" width="36.8" height="19.6" fill="#4472C4"/><rect x="181.62" y="562.74" width="28.7" height="14.5" fill="#9fb3a6"/><rect x="204.59" y="563.14" width="5.74" height="13.72" fill="#4a9a6c"/><rect x="187.36" y="564.7" width="5.74" height="7.06" fill="#4c4f4b"/><rect x="194.83" y="564.31" width="5.17" height="7.06" fill="#3a3b36"/><rect x="187.94" y="573.72" width="16.07" height="1.96" fill="#66756a"/><rect x="181.05" y="563.14" width="1.72" height="13.72" fill="#15171c"/><rect x="245" y="558" width="33.8" height="20" fill="#4472C4"/><rect x="246.35" y="560.8" width="26.36" height="14.8" fill="#9fb3a6"/><rect x="246.35" y="561.2" width="5.27" height="14" fill="#4a9a6c"/><rect x="254.79" y="562.8" width="5.27" height="7.2" fill="#4c4f4b"/><rect x="261.64" y="562.4" width="4.75" height="7.2" fill="#3a3b36"/><rect x="252.15" y="572" width="14.76" height="2" fill="#66756a"/><rect x="271.66" y="561.2" width="1.58" height="14" fill="#15171c"/><rect x="285" y="559" width="40" height="23.6" fill="#1DBB50"/><g fill="#effff0"><text x="296.4" y="568.2" font-size="3.9" font-weight="bold" xml:space="preserve">USB TO TTL</text></g><g fill="#effff0"><text x="296.4" y="574.4" font-size="3.9" font-weight="bold" xml:space="preserve">CH340</text><text x="308.54" y="574.4" font-size="3.9" font-weight="bold">模块</text></g><rect x="163" y="561.6" width="6" height="1.8" fill="#127a32"/><rect x="287" y="562.2" width="6" height="1.8" fill="#127a32"/><path d="M169.6 562.6 L175.8 564.8" fill="none" stroke="#c0342c" stroke-width="0.8" /><path d="M278.6 560.2 L286.6 564" fill="none" stroke="#c0342c" stroke-width="0.8" /><rect x="163" y="566.6" width="6" height="1.8" fill="#127a32"/><rect x="287" y="567.2" width="6" height="1.8" fill="#127a32"/><path d="M169.6 567.6 L175.8 569.2" fill="none" stroke="#c0342c" stroke-width="0.8" /><path d="M278.6 565.6 L286.6 569" fill="none" stroke="#c0342c" stroke-width="0.8" /><rect x="163" y="572" width="6" height="1.8" fill="#127a32"/><rect x="287" y="572.6" width="6" height="1.8" fill="#127a32"/><path d="M169.6 573 L175.8 574" fill="none" stroke="#1a1a1a" stroke-width="0.8" /><path d="M278.6 571.4 L286.6 574.4" fill="none" stroke="#1a1a1a" stroke-width="0.8" /><rect x="163" y="577.4" width="6" height="1.8" fill="#127a32"/><rect x="287" y="578" width="6" height="1.8" fill="#127a32"/><path d="M169.6 578.4 L175.8 578.8" fill="none" stroke="#1a1a1a" stroke-width="0.8" /><path d="M278.6 577.2 L286.6 579.8" fill="none" stroke="#1a1a1a" stroke-width="0.8" /><rect x="229" y="567.6" width="4.6" height="0.8" fill="#9a9a9a"/><rect x="229" y="569.8" width="4.6" height="0.8" fill="#9a9a9a"/><g fill="#444"><text x="66.6" y="475.4" font-size="12.2" xml:space="preserve">31</text></g><polygon points="76,480.6 76.96,483.17 79.71,483.29 77.56,485.01 78.29,487.66 76,486.14 73.71,487.66 74.44,485.01 72.29,483.29 75.04,483.17" fill="#5a5a5a" />
<rect x="92.4" y="627.9" width="254.6" height="143" fill="#fff"/><rect x="93.6" y="630.2" width="38" height="1.1" fill="#d9d9d9"/><rect x="133.4" y="630.2" width="17" height="1.1" fill="#e0e0e0"/><rect x="290.5" y="629.9" width="55.5" height="1.1" fill="#d9d9d9"/><rect x="94.4" y="767.3" width="55.5" height="1.1" fill="#d9d9d9"/><rect x="288.4" y="767.8" width="38" height="1.1" fill="#d9d9d9"/><rect x="328" y="767.8" width="17" height="1.1" fill="#d9d9d9"/><rect x="127.6" y="633.8" width="23.6" height="38.2" fill="#dedee0"/><rect x="127.6" y="633.8" width="23.6" height="4.2" fill="#8f9fc2"/><rect x="129" y="640.4" width="20.6" height="0.6" fill="#c3c3c6"/><rect x="129" y="643.4" width="20.6" height="0.6" fill="#c3c3c6"/><rect x="129" y="646.4" width="20.6" height="0.6" fill="#c3c3c6"/><rect x="129" y="649.4" width="20.6" height="0.6" fill="#c3c3c6"/><rect x="143.8" y="652" width="8.8" height="3.6" fill="none" stroke="#d9454f" stroke-width="0.7"/><rect x="154" y="653" width="1.6" height="2" fill="#d9454f"/><rect x="128.4" y="656.2" width="7.4" height="3.8" fill="#1CA4C4"/><rect x="137" y="656.2" width="6" height="3.8" fill="#1CA4C4"/><rect x="144.4" y="656.2" width="6.4" height="3.8" fill="#1CA4C4"/><rect x="128.4" y="661.6" width="7.4" height="3.6" fill="#1CA4C4"/><rect x="137" y="661.6" width="6" height="3.6" fill="#1CA4C4"/><rect x="144.4" y="661.6" width="6.4" height="3.6" fill="#1CA4C4"/><rect x="128.4" y="667.4" width="7.4" height="3.8" fill="#1CA4C4"/><rect x="137" y="667.4" width="6" height="3.8" fill="#1CA4C4"/><rect x="144.4" y="667.4" width="6.4" height="3.8" fill="#1CA4C4"/><rect x="166" y="634.6" width="22.8" height="37.4" fill="#e9e9ea"/><rect x="166" y="634.6" width="22.8" height="19.4" fill="#4f4f52"/><rect x="166" y="634.6" width="22.8" height="1.8" fill="#2f2f32"/><rect x="168" y="644.6" width="18" height="0.7" fill="#77777a"/><rect x="168" y="650.6" width="18" height="0.8" fill="#9a9a9e"/><rect x="167.4" y="655.4" width="20.2" height="13.2" fill="#f7f7f7" stroke="#bdbdbd" stroke-width="0.5"/><rect x="169" y="658.6" width="14" height="0.8" fill="#8d8d8d"/><rect x="169" y="661.6" width="16" height="0.6" fill="#c3c3c3"/><rect x="170" y="665.4" width="6" height="1.4" fill="#8a8a8a"/><rect x="179" y="665.4" width="6" height="1.4" fill="#8a8a8a"/><g fill="#444"><text x="66.6" y="635.7" font-size="12.2" xml:space="preserve">32</text></g><polygon points="76,640.9 76.96,643.47 79.71,643.59 77.56,645.31 78.29,647.96 76,646.44 73.71,647.96 74.44,645.31 72.29,643.59 75.04,643.47" fill="#5a5a5a" /></g>
<g id="editor"><use href="#s29"/></g>
<g id="chrome"><g filter="url(#soft1)"><rect x="832" y="-4" width="70" height="36" fill="#A53A2C"/><rect x="901" y="-4" width="74" height="42.6" fill="#95382C"/><rect x="974" y="-4" width="134" height="35.6" fill="#9A392C"/></g><path d="M80.4 8.8 h8.6 l1 1 v8.6 h-9.6 z" fill="none" stroke="#fff" stroke-width="1.7"/><rect x="82.6" y="8.8" width="5.2" height="3.6" fill="#fff"/><rect x="84.2" y="9.4" width="2.2" height="2.2" fill="#B03B2B"/><rect x="82.4" y="14.4" width="5.8" height="4.2" fill="#fff"/><rect x="84" y="15.8" width="2.6" height="2.8" fill="#B03B2B"/><path d="M104 11.2 h5.2 a3.6 3.6 0 0 1 0 7.2 h-1.6" fill="none" stroke="#fff" stroke-width="1.6"/><polygon points="102.6,11.2 107.4,7.6 107.4,14.8" fill="#fff" /><path d="M120 11.4 l2.8 2.8 l2.8 -2.8" fill="none" stroke="#e9b9ae" stroke-width="1"/><path d="M136.6 9.4 a4.2 4.2 0 1 0 6 0 M139.6 7.4 v4" fill="none" stroke="#cf7d6e" stroke-width="1.3"/><path d="M156.6 8.6 h11.6 M158 8.6 v7.6 h5 M166.8 8.6 v2.4 M162 19.4 h4 M164 16.6 v2.8" fill="none" stroke="#fff" stroke-width="1.2"/><circle cx="165.2" cy="13.8" r="3.1" fill="#B23C2A" stroke="#fff" stroke-width="1"/><polygon points="164.2,12.2 164.2,15.4 166.8,13.8" fill="#fff" /><rect x="183.6" y="11.2" width="4.8" height="0.9" fill="#f0cfc7"/><polygon points="183.4,13.2 188.6,13.2 186,15.8" fill="#f0cfc7" /><g fill="#F6DDD6"><text x="543.8" y="17.3" font-size="10">小车</text><text transform="translate(563.79 17.3) scale(0.94 1)" font-size="10.2" xml:space="preserve">V3.1PPT-</text><text x="605.58" y="17.3" font-size="10">项目素材</text><text transform="translate(645.56 17.3) scale(0.94 1)" font-size="10.2" xml:space="preserve">.pptx</text></g><rect x="672.4" y="13.5" width="4.8" height="0.8" fill="#e9b9ae"/><g fill="#F6DDD6"><text x="681" y="17.3" font-size="10.4" xml:space="preserve">PowerPoint</text></g><polygon points="995.6,16 1006.2,16 1000.9,6.2" fill="#F6E3A6" /><rect x="1000.4" y="9.4" width="1" height="3.6" fill="#5a3a20"/><rect x="1000.4" y="13.8" width="1" height="1" fill="#5a3a20"/><g fill="#FBEDE8"><text x="1015" y="15.6" font-size="10.6" xml:space="preserve">zkm zkm</text></g><rect x="1063.4" y="1.2" width="19.6" height="19.8" fill="#ABABAB"/><circle cx="1073.2" cy="8.2" r="3.7" fill="#fff"/><path d="M1066.6 20.6 v-3.4 q0 -4.4 4.4 -4.4 h4.4 q4.4 0 4.4 4.4 v3.4 z" fill="#fff"/><path d="M1101.6 7.6 h10.2 v7.6 h-10.2 z M1101.6 9.8 h10.2" fill="none" stroke="#f3d5cd" stroke-width="1.1"/><polygon points="1104.6,13.4 1108.8,13.4 1106.7,11" fill="#f3d5cd" /><rect x="1134.4" y="10.6" width="7" height="0.9" fill="#f3d5cd"/><path d="M1165 9 h6 v6 h-6 z M1166.6 9 v-1.6 h6 v6 h-1.6" fill="none" stroke="#f3d5cd" stroke-width="1"/><path d="M1195.6 7 l8.2 8.2 M1203.8 7 l-8.2 8.2" stroke="#f6ded8" stroke-width="1.05" fill="none"/><g fill="#fff"><text x="77.6" y="42.5" font-size="9.85">文件</text></g><g fill="#fff"><text x="122" y="42.5" font-size="9.85">开始</text></g><g fill="#fff"><text x="162" y="42.5" font-size="9.85">插入</text></g><g fill="#fff"><text x="200.4" y="42.5" font-size="9.85">设计</text></g><g fill="#fff"><text x="240.4" y="42.5" font-size="9.85">切换</text></g><g fill="#fff"><text x="280.6" y="42.5" font-size="9.85">动画</text></g><g fill="#fff"><text x="320.8" y="42.5" font-size="9.85">幻灯片放映</text></g><g fill="#fff"><text x="390" y="42.5" font-size="9.85">录制</text></g><g fill="#fff"><text x="430" y="42.5" font-size="9.85">审阅</text></g><g fill="#fff"><text x="470" y="42.5" font-size="9.85">视图</text></g><g fill="#fff"><text x="510" y="42.5" font-size="9.85">帮助</text></g><path d="M554.6 41.2 a4.1 4.1 0 1 1 5.4 0 q-0.8 0.9 -0.8 2.4 h-3.8 q0 -1.5 -0.8 -2.4 z M555.6 45.4 h3.4" fill="none" stroke="#fff" stroke-width="1"/><g fill="#fff"><text x="572.6" y="42.5" font-size="9.75">操作说明搜索</text></g><circle cx="1169.4" cy="37.6" r="2.7" fill="none" stroke="#fff" stroke-width="1.1"/><path d="M1165.4 45.4 q0 -4.6 4 -4.6 q1.8 0 2.8 1 M1171.6 43.6 h4.6 M1173.9 41.3 v4.6" fill="none" stroke="#fff" stroke-width="1.1"/><g fill="#fff"><text x="1180" y="42.6" font-size="9.8">共享</text></g><polygon points="367.5,60.1 373.9,60.1 370.7,56.7" fill="#5e5e5e" /><polygon points="367.5,662.3 373.9,662.3 370.7,665.7" fill="#5e5e5e" /><polygon points="1204.8,60.1 1211.2,60.1 1208,56.7" fill="#5e5e5e" /><polygon points="1204.8,580.1 1211.2,580.1 1208,583.5" fill="#5e5e5e" /><polygon points="1204.7,595 1211.3,595 1208,591.8" fill="#5e5e5e" /><polygon points="1204.7,598.6 1211.3,598.6 1208,595.4" fill="#5e5e5e" /><polygon points="1204.7,604.6 1211.3,604.6 1208,607.8" fill="#5e5e5e" /><polygon points="1204.7,608.2 1211.3,608.2 1208,611.4" fill="#5e5e5e" /><polygon points="388.6,619.4 388.6,625.4 385.4,622.4" fill="#5e5e5e" /><polygon points="1192.4,619.4 1192.4,625.4 1195.6,622.4" fill="#5e5e5e" /><g fill="#4f4f4f"><text x="386.2" y="643.6" font-size="8.7">单击此处添加备注</text></g><g fill="#3e3e3e"><text x="69.4" y="683.5" font-size="9.8">幻灯片</text><text x="98.8" y="683.5" font-size="9.8" xml:space="preserve"> </text><text x="101.52" y="683.5" font-size="9.8">第</text><text x="111.32" y="683.5" font-size="9.8" xml:space="preserve"> 29 </text><text x="127.67" y="683.5" font-size="9.8">张，共</text><text x="157.07" y="683.5" font-size="9.8" xml:space="preserve"> 39 </text><text x="173.41" y="683.5" font-size="9.8">张</text></g><path d="M197 676 h5.4 v8.6 h-5.4 z M202.4 676 h2.2" fill="none" stroke="#8a8a8a" stroke-width="0.8"/><path d="M205.6 677.2 l3.6 3.8 M209.2 677.2 l-3.6 3.8" stroke="#777" stroke-width="0.8"/><g fill="#3e3e3e"><text x="222.6" y="683.5" font-size="9.55">中文</text><text transform="translate(241.71 683.5) scale(0.85 1)" font-size="9.8" xml:space="preserve">(</text><text x="244.48" y="683.5" font-size="9.55">中国</text><text transform="translate(263.59 683.5) scale(0.85 1)" font-size="9.8" xml:space="preserve">)</text></g><circle cx="284.6" cy="679.4" r="3.3" fill="none" stroke="#555" stroke-width="0.9"/><path d="M284.6 677.4 v2.4 l1.6 1 M286.8 682 l3.8 3.4 M290.6 681.4 l-3 3.6" stroke="#444" stroke-width="1.1" fill="none"/><g fill="#3e3e3e"><text x="293.8" y="683.5" font-size="9.55">辅助功能</text><text x="332.02" y="683.5" font-size="9.8" xml:space="preserve">: </text><text x="337.47" y="683.5" font-size="9.55">调查</text></g><path d="M753 683.4 h7.6 M753.8 680.8 h6 M755.2 678.2 h3.2" stroke="#9a9a9a" stroke-width="1"/><polygon points="755,677 758.6,677 756.8,675.2" fill="#777" /><g fill="#3e3e3e"><text x="765.4" y="683.5" font-size="9.55">备注</text></g><rect x="797.2" y="675.2" width="11" height="6.8" fill="#4d4d4d"/><rect x="801" y="682" width="3.4" height="2" fill="#4d4d4d"/><circle cx="806.6" cy="683" r="2.2" fill="#F3F3F3" stroke="#4d4d4d" stroke-width="0.9"/><g fill="#3e3e3e"><text x="811" y="683.5" font-size="9.55">显示器设置</text></g><path d="M874.2 675.4 h10.6 v6.6 h-6 l-2.2 2.4 v-2.4 h-2.4 z" fill="#4d4d4d"/><g fill="#3e3e3e"><text x="888" y="683.5" font-size="9.55">批注</text></g><path d="M932.2 674.8 h10.2 v9.4 h-10.2 z M932.2 677.2 h10.2 M935.2 677.2 v7" fill="none" stroke="#7a7a7a" stroke-width="0.9"/><path d="M964.2 675 h4.6 v3.6 h-4.6 z M970.4 675 h4.6 v3.6 h-4.6 z M964.2 680.4 h4.6 v3.6 h-4.6 z M970.4 680.4 h4.6 v3.6 h-4.6 z" fill="none" stroke="#b0b0b0" stroke-width="0.8"/><path d="M995.4 675.4 q2.8 -1 5.4 0.6 q2.6 -1.6 5.6 -0.6 v8.2 q-3 -1 -5.6 0.6 q-2.6 -1.6 -5.4 -0.6 z M1000.8 676 v8.6" fill="#dcdcdc" stroke="#b0b0b0" stroke-width="0.7"/><path d="M1027.6 675.2 h11 M1028.6 675.2 v6 h9 v-6 M1033.1 681.2 v2.6 M1030.8 684 h4.6" fill="none" stroke="#b0b0b0" stroke-width="0.9"/><rect x="1055.6" y="679.4" width="3.4" height="0.7" fill="#b5b5b5"/><rect x="1065" y="679.3" width="78.8" height="0.8" fill="#5c5c5c"/><rect x="1104.2" y="677.2" width="0.8" height="5" fill="#5c5c5c"/><rect x="1093.8" y="675" width="3.7" height="8.8" fill="#454545"/><rect x="1150.6" y="679.4" width="3.4" height="0.7" fill="#b5b5b5"/><rect x="1151.95" y="677.9" width="0.7" height="3.6" fill="#b5b5b5"/><g fill="#505050"><text x="1165" y="683.8" font-size="10.2" xml:space="preserve">79%</text></g><path d="M1202.4 675.4 h7.4 v8 h-7.4 z M1204.2 677.2 l1.4 1.4 M1208 677.2 l-1.4 1.4 M1204.2 681.6 l1.4 -1.4 M1208 681.6 l-1.4 -1.4" fill="none" stroke="#a8a8a8" stroke-width="0.7"/><rect x="299.4" y="688" width="37.8" height="32" fill="#33454F"/><rect x="337.6" y="688" width="39.8" height="32" fill="#4A5962"/><rect x="145" y="718.2" width="31" height="1.8" fill="#8DBBE0"/><rect x="222.6" y="718.2" width="34" height="1.8" fill="#8DBBE0"/><rect x="262" y="718.2" width="34" height="1.8" fill="#8DBBE0"/><rect x="300.6" y="718.2" width="35.8" height="1.8" fill="#8DBBE0"/><rect x="338.6" y="718.2" width="38" height="1.8" fill="#8DBBE0"/><rect x="381" y="718.2" width="31.6" height="1.8" fill="#8DBBE0"/><polygon points="76,699.3 81.8,698.5 81.8,703.6 76,703.6" fill="#fff" /><polygon points="82.8,698.4 89.6,697.4 89.6,703.6 82.8,703.6" fill="#fff" /><polygon points="76,704.6 81.8,704.6 81.8,709.7 76,708.9" fill="#fff" /><polygon points="82.8,704.6 89.6,704.6 89.6,710.8 82.8,709.8" fill="#fff" /><circle cx="123.2" cy="701.8" r="4.3" fill="none" stroke="#fff" stroke-width="1.4"/><path d="M120.2 705 l-5.2 5.6" stroke="#fff" stroke-width="1.6"/><path d="M152.6 698.2 h6.4 l1.6 1.8 h9.4 v10.8 h-17.4 z" fill="#F2B92D"/><rect x="152.6" y="701.4" width="17.4" height="9.4" fill="#FAD45A"/><rect x="155.4" y="704.6" width="11.8" height="6.2" fill="#3E8ED8"/><rect x="158" y="706.8" width="6.6" height="4" fill="#FAD45A"/><circle cx="201" cy="704" r="9.8" fill="#E2402F"/><path d="M201 704 L192.5 699.1 A9.8 9.8 0 0 0 205.9 712.49 Z" fill="#2FA24D"/><path d="M201 704 L205.9 712.49 A9.8 9.8 0 0 0 210.8 704 L205.9 703.9 Z" fill="#F8C81C"/><path d="M201 704 L210.8 704 A9.8 9.8 0 0 0 209.49 699.1 L201 699.1 Z" fill="#E2402F"/><circle cx="201" cy="704" r="4.6" fill="#fff"/><circle cx="201" cy="704" r="3.6" fill="#3F7FE8"/><polygon points="231,713.6 233,696 239.6,694.4 239.6,713.6" fill="#8A86C8" /><polygon points="239.6,694.4 244,696.6 244,713.6 239.6,713.6" fill="#3A3F8F" /><rect x="233.6" y="697.4" width="1.6" height="14.6" fill="#CFCDEE"/><rect x="236.6" y="697" width="1.6" height="15" fill="#CFCDEE"/><rect x="243.2" y="703" width="6.4" height="10.6" fill="#2C3A66"/><rect x="241.4" y="707.6" width="8.8" height="6.2" fill="#55608E"/><rect x="242.6" y="709" width="1.6" height="1.6" fill="#E8D36A"/><rect x="245.4" y="709" width="1.6" height="1.6" fill="#E8D36A"/><rect x="248" y="709" width="1.4" height="1.6" fill="#E8D36A"/><rect x="244.8" y="700.6" width="1.4" height="2.6" fill="#d8d8e8"/><rect x="270.2" y="694.6" width="18.8" height="18.6" fill="#F4F4F2" rx="4.6"/><g fill="#6b6b6b"><text x="275.63" y="709" font-size="13" xml:space="preserve">T</text></g><circle cx="321" cy="704" r="9.2" fill="#E0492C"/><path d="M321 704 L321 694.8 A9.2 9.2 0 0 1 330.2 704 Z" fill="#F08A62"/><path d="M321 704 H330.2 A9.2 9.2 0 0 1 321 713.2 Z" fill="#C2321C"/><rect x="309.2" y="698.6" width="10.6" height="10.8" fill="#B7301B" rx="1.2"/><g fill="#fff"><text x="311.63" y="707.4" font-size="8.6" font-weight="bold" xml:space="preserve">P</text></g><circle cx="358" cy="704" r="9.4" fill="#1f1f24" stroke="#d9d9d9" stroke-width="1.2"/><path d="M358 697.2 a3.4 3.4 0 0 1 2.6 5.6 M352.6 707.4 a3.4 3.4 0 0 1 3.2 -5 M362.8 709 a3.4 3.4 0 0 1 -6 -0.6" fill="none" stroke="#e6e6e6" stroke-width="1.7" stroke-linecap="round"/><rect x="387.6" y="694.2" width="19.4" height="19.4" fill="#E33B52" rx="2.6"/><g fill="#fff"><text x="390" y="709.2" font-size="14.6" font-weight="bold">無</text></g><path d="M1024.8 707.2 l5 -5 l5 5" fill="none" stroke="#fff" stroke-width="1.2"/><rect x="1045.6" y="697.2" width="5.6" height="9.2" fill="#E9EEF2" rx="2.7"/><path d="M1043.8 704 v1.2 q0 3.2 4.6 3.2 q4.6 0 4.6 -3.2 v-1.2 M1048.4 708.4 v2.2" fill="none" stroke="#cfd6dc" stroke-width="0.9"/><polygon points="1061.2,702.2 1063.8,702.2 1066.8,699.4 1066.8,709 1063.8,706.2 1061.2,706.2" fill="none" stroke="#fff" stroke-width="0.9"/><path d="M1068.8 701.8 q1.6 2.4 0 4.8 M1070.8 700 q3 4.2 0 8.4" fill="none" stroke="#fff" stroke-width="0.9"/><path d="M1083.2 709.6 a9.4 9.4 0 0 1 9.6 -9.4 M1085.8 709.6 a6.8 6.8 0 0 1 7 -6.8 M1088.6 709.6 a4 4 0 0 1 4.2 -4" fill="none" stroke="#e4e9ee" stroke-width="1.05"/><circle cx="1091.8" cy="709" r="1.1" fill="#fff"/><g fill="#fff"><text x="1098.6" y="708.6" font-size="12.4">英</text></g><g fill="#fff"><text x="1130.74" y="700.9" font-size="10.6" xml:space="preserve">13:26</text></g><g fill="#fff"><text x="1123.17" y="715.6" font-size="10.6" xml:space="preserve">2023/1/8</text></g><path d="M1182.6 697.6 h13 v9.6 h-7 l-2.6 2.8 v-2.8 h-3.4 z" fill="none" stroke="#fff" stroke-width="1.1"/><circle cx="1194" cy="708" r="2.6" fill="#1C2B40" stroke="#fff" stroke-width="0.9"/><rect x="1211" y="688" width="0.7" height="32" fill="#53606e"/></g>
<g id="overlay"><g opacity="0.86"><g fill="#fff"><text x="23" y="58.2" font-size="24.4" font-weight="bold">好家伙</text></g><g fill="#fff"><text transform="translate(99.8 56.4) scale(0.93 1)" font-size="29.5" font-weight="bold" xml:space="preserve">vcc</text></g></g><g opacity="0.78"><polygon points="157,26 163.8,24.4 166.6,60 161,60" fill="#fff" /><path d="M166.4 51 q13 -2.4 15 4 q1 6 -13.6 6.4 z M169.6 54 q5.4 -1 6.4 1.8 q0.4 2.6 -5.8 2.8 z" fill="#fff" fill-rule="evenodd"/><polygon points="182,36.2 184,36.2 184.6,42.8 182.6,42.8" fill="#fff" /><polygon points="185,36.2 187,36.2 187.4,42.8 185.4,42.8" fill="#fff" /><polygon points="182.8,45 187.4,45 188.4,60 183.8,60" fill="#fff" /><polygon points="188.2,29.2 193.8,28 196.6,60 191.2,60" fill="#fff" /><polygon points="197,36.2 199,36.2 199.6,42.8 197.6,42.8" fill="#fff" /><polygon points="200,36.2 202,36.2 202.4,42.8 200.4,42.8" fill="#fff" /><polygon points="197.8,45 202.4,45 203.4,60 198.8,60" fill="#fff" /><polygon points="203.8,26 211.2,24.4 213.6,60 208,60" fill="#fff" /><path d="M213.4 51 q13 -2.4 15 4 q1 6 -13.6 6.4 z M216.6 54 q5.4 -1 6.4 1.8 q0.4 2.6 -5.8 2.8 z" fill="#fff" fill-rule="evenodd"/><polygon points="228.4,36.2 230.4,36.2 231,42.8 229,42.8" fill="#fff" /><polygon points="231.4,36.2 233.4,36.2 233.8,42.8 231.8,42.8" fill="#fff" /><polygon points="229.2,45 233.8,45 234.8,60 230.2,60" fill="#fff" /><polygon points="235,29.2 240.2,28 243.2,60 238,60" fill="#fff" /><polygon points="243.6,36.2 245.6,36.2 246.2,42.8 244.2,42.8" fill="#fff" /><polygon points="246.6,36.2 248.6,36.2 249,42.8 247,42.8" fill="#fff" /><polygon points="244.4,45 249,45 250,60 245.4,60" fill="#fff" /></g></g>
</svg>
</body></html>
